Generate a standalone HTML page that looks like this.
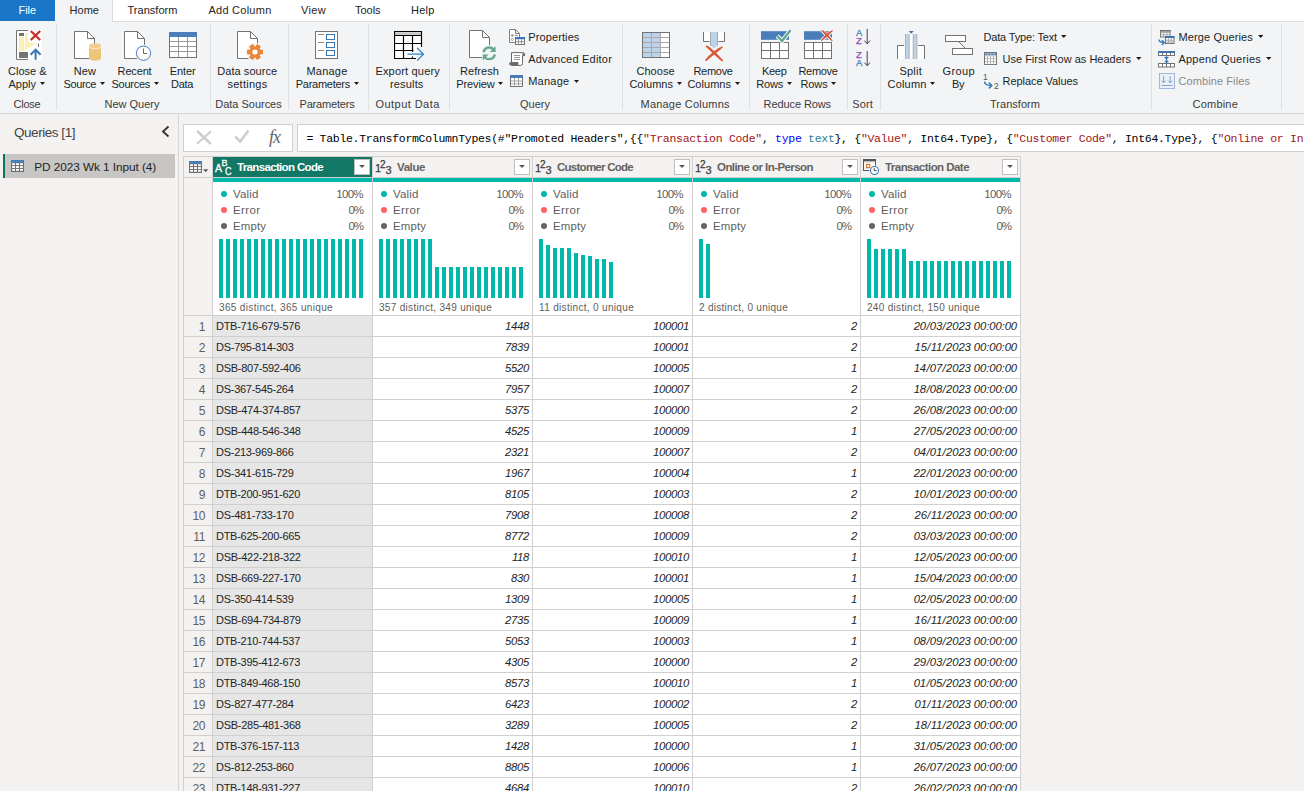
<!DOCTYPE html>
<html><head><meta charset="utf-8"><title>Power Query Editor</title>
<style>
html,body{margin:0;padding:0;width:1304px;height:791px;overflow:hidden;}
body{position:relative;background:#f3f2f1;font-family:"Liberation Sans",sans-serif;}
#w{position:absolute;left:0;top:0;width:1304px;height:791px;overflow:hidden;background:#f3f2f1;}
.t{position:absolute;white-space:pre;display:block;}
.b{position:absolute;display:block;}
</style></head><body><div id="w">
<div class="b" style="left:0px;top:0px;width:1304px;height:21px;background:#ffffff;"></div>
<div class="b" style="left:112px;top:21px;width:1192px;height:1px;background:#dadbdc;"></div>
<div class="b" style="left:0px;top:0px;width:55px;height:21px;background:#1976c8;"></div>
<div class="b" style="left:55px;top:0px;width:57px;height:22px;background:#f3f4f6;border-right:1px solid #dadbdc;"></div>
<span class="t" style="top:4.34px;font-size:11px;line-height:12.29px;color:#ffffff;left:18.50px;letter-spacing:-0.056px;">File</span>
<span class="t" style="top:4.34px;font-size:11px;line-height:12.29px;color:#252423;left:69.50px;letter-spacing:0.040px;">Home</span>
<span class="t" style="top:4.34px;font-size:11px;line-height:12.29px;color:#252423;left:127.50px;letter-spacing:0.033px;">Transform</span>
<span class="t" style="top:4.34px;font-size:11px;line-height:12.29px;color:#252423;left:208.50px;letter-spacing:0.247px;">Add Column</span>
<span class="t" style="top:4.34px;font-size:11px;line-height:12.29px;color:#252423;left:301.00px;letter-spacing:0.339px;">View</span>
<span class="t" style="top:4.34px;font-size:11px;line-height:12.29px;color:#252423;left:355.00px;letter-spacing:-0.036px;">Tools</span>
<span class="t" style="top:4.34px;font-size:11px;line-height:12.29px;color:#252423;left:411.00px;letter-spacing:0.219px;">Help</span>
<div class="b" style="left:0px;top:22px;width:1304px;height:91px;background:#f3f4f6;"></div>
<div class="b" style="left:0px;top:113px;width:1304px;height:1px;background:#d6d7d9;"></div>
<div class="b" style="left:0px;top:114px;width:1304px;height:677px;background:#f3f2f1;"></div>
<div class="b" style="left:56px;top:24px;width:1px;height:86px;background:#dfe0e2;"></div>
<div class="b" style="left:210px;top:24px;width:1px;height:86px;background:#dfe0e2;"></div>
<div class="b" style="left:288px;top:24px;width:1px;height:86px;background:#dfe0e2;"></div>
<div class="b" style="left:368px;top:24px;width:1px;height:86px;background:#dfe0e2;"></div>
<div class="b" style="left:449px;top:24px;width:1px;height:86px;background:#dfe0e2;"></div>
<div class="b" style="left:622px;top:24px;width:1px;height:86px;background:#dfe0e2;"></div>
<div class="b" style="left:749px;top:24px;width:1px;height:86px;background:#dfe0e2;"></div>
<div class="b" style="left:847px;top:24px;width:1px;height:86px;background:#dfe0e2;"></div>
<div class="b" style="left:880px;top:24px;width:1px;height:86px;background:#dfe0e2;"></div>
<div class="b" style="left:1151px;top:24px;width:1px;height:86px;background:#dfe0e2;"></div>
<div class="b" style="left:1281px;top:24px;width:1px;height:86px;background:#dfe0e2;"></div>
<span class="t" style="top:65.34px;font-size:11px;line-height:12.29px;color:#201f1e;left:8.00px;letter-spacing:-0.002px;">Close &amp;</span>
<span class="t" style="top:78.34px;font-size:11px;line-height:12.29px;color:#201f1e;left:8.50px;letter-spacing:-0.003px;">Apply</span>
<svg class="b" style="left:39.8px;top:82px" width="5" height="3" viewBox="0 0 5 3"><path d="M0 0H5L2.5 3Z" fill="#201f1e"/></svg>
<span class="t" style="top:98.34px;font-size:11px;line-height:12.29px;color:#3b3a39;left:13.50px;letter-spacing:-0.224px;">Close</span>
<span class="t" style="top:65.34px;font-size:11px;line-height:12.29px;color:#201f1e;left:73.70px;letter-spacing:0.098px;">New</span>
<span class="t" style="top:78.34px;font-size:11px;line-height:12.29px;color:#201f1e;left:63.60px;letter-spacing:-0.409px;">Source</span>
<svg class="b" style="left:99.8px;top:82px" width="5" height="3" viewBox="0 0 5 3"><path d="M0 0H5L2.5 3Z" fill="#201f1e"/></svg>
<span class="t" style="top:65.34px;font-size:11px;line-height:12.29px;color:#201f1e;left:117.60px;letter-spacing:-0.159px;">Recent</span>
<span class="t" style="top:78.34px;font-size:11px;line-height:12.29px;color:#201f1e;left:111.50px;letter-spacing:-0.264px;">Sources</span>
<svg class="b" style="left:153.8px;top:82px" width="5" height="3" viewBox="0 0 5 3"><path d="M0 0H5L2.5 3Z" fill="#201f1e"/></svg>
<span class="t" style="top:65.34px;font-size:11px;line-height:12.29px;color:#201f1e;left:169.70px;letter-spacing:-0.098px;">Enter</span>
<span class="t" style="top:78.34px;font-size:11px;line-height:12.29px;color:#201f1e;left:171.00px;letter-spacing:-0.309px;">Data</span>
<span class="t" style="top:98.34px;font-size:11px;line-height:12.29px;color:#3b3a39;left:104.50px;letter-spacing:-0.002px;">New Query</span>
<span class="t" style="top:65.34px;font-size:11px;line-height:12.29px;color:#201f1e;left:217.20px;letter-spacing:0.072px;">Data source</span>
<span class="t" style="top:78.34px;font-size:11px;line-height:12.29px;color:#201f1e;left:227.50px;letter-spacing:0.249px;">settings</span>
<span class="t" style="top:98.34px;font-size:11px;line-height:12.29px;color:#3b3a39;left:215.30px;letter-spacing:-0.020px;">Data Sources</span>
<span class="t" style="top:65.34px;font-size:11px;line-height:12.29px;color:#201f1e;left:306.50px;letter-spacing:0.209px;">Manage</span>
<span class="t" style="top:78.34px;font-size:11px;line-height:12.29px;color:#201f1e;left:295.80px;letter-spacing:-0.265px;">Parameters</span>
<svg class="b" style="left:353.8px;top:82px" width="5" height="3" viewBox="0 0 5 3"><path d="M0 0H5L2.5 3Z" fill="#201f1e"/></svg>
<span class="t" style="top:98.34px;font-size:11px;line-height:12.29px;color:#3b3a39;left:299.50px;letter-spacing:-0.185px;">Parameters</span>
<span class="t" style="top:65.34px;font-size:11px;line-height:12.29px;color:#201f1e;left:375.40px;letter-spacing:0.187px;">Export query</span>
<span class="t" style="top:78.34px;font-size:11px;line-height:12.29px;color:#201f1e;left:390.00px;letter-spacing:0.158px;">results</span>
<span class="t" style="top:98.34px;font-size:11px;line-height:12.29px;color:#3b3a39;left:375.50px;letter-spacing:0.445px;">Output Data</span>
<span class="t" style="top:65.34px;font-size:11px;line-height:12.29px;color:#201f1e;left:460.00px;letter-spacing:0.069px;">Refresh</span>
<span class="t" style="top:78.34px;font-size:11px;line-height:12.29px;color:#201f1e;left:456.30px;letter-spacing:-0.132px;">Preview</span>
<svg class="b" style="left:498.3px;top:82px" width="5" height="3" viewBox="0 0 5 3"><path d="M0 0H5L2.5 3Z" fill="#201f1e"/></svg>
<span class="t" style="top:31.35px;font-size:11px;line-height:12.29px;color:#201f1e;left:528.20px;letter-spacing:0.117px;">Properties</span>
<span class="t" style="top:53.34px;font-size:11px;line-height:12.29px;color:#201f1e;left:528.20px;letter-spacing:0.206px;">Advanced Editor</span>
<span class="t" style="top:75.34px;font-size:11px;line-height:12.29px;color:#201f1e;left:528.20px;letter-spacing:0.259px;">Manage</span>
<svg class="b" style="left:574px;top:79.5px" width="5" height="3" viewBox="0 0 5 3"><path d="M0 0H5L2.5 3Z" fill="#201f1e"/></svg>
<span class="t" style="top:98.34px;font-size:11px;line-height:12.29px;color:#3b3a39;left:520.00px;letter-spacing:0.009px;">Query</span>
<span class="t" style="top:65.34px;font-size:11px;line-height:12.29px;color:#201f1e;left:636.40px;letter-spacing:0.081px;">Choose</span>
<span class="t" style="top:78.34px;font-size:11px;line-height:12.29px;color:#201f1e;left:629.40px;letter-spacing:0.028px;">Columns</span>
<svg class="b" style="left:676.8px;top:82px" width="5" height="3" viewBox="0 0 5 3"><path d="M0 0H5L2.5 3Z" fill="#201f1e"/></svg>
<span class="t" style="top:65.34px;font-size:11px;line-height:12.29px;color:#201f1e;left:693.40px;letter-spacing:-0.276px;">Remove</span>
<span class="t" style="top:78.34px;font-size:11px;line-height:12.29px;color:#201f1e;left:687.40px;letter-spacing:0.028px;">Columns</span>
<svg class="b" style="left:734.8px;top:82px" width="5" height="3" viewBox="0 0 5 3"><path d="M0 0H5L2.5 3Z" fill="#201f1e"/></svg>
<span class="t" style="top:98.34px;font-size:11px;line-height:12.29px;color:#3b3a39;left:640.50px;letter-spacing:0.214px;">Manage Columns</span>
<span class="t" style="top:65.34px;font-size:11px;line-height:12.29px;color:#201f1e;left:762.00px;letter-spacing:-0.297px;">Keep</span>
<span class="t" style="top:78.34px;font-size:11px;line-height:12.29px;color:#201f1e;left:756.20px;letter-spacing:-0.176px;">Rows</span>
<svg class="b" style="left:786.8px;top:82px" width="5" height="3" viewBox="0 0 5 3"><path d="M0 0H5L2.5 3Z" fill="#201f1e"/></svg>
<span class="t" style="top:65.34px;font-size:11px;line-height:12.29px;color:#201f1e;left:798.50px;letter-spacing:-0.326px;">Remove</span>
<span class="t" style="top:78.34px;font-size:11px;line-height:12.29px;color:#201f1e;left:800.50px;letter-spacing:-0.126px;">Rows</span>
<svg class="b" style="left:831.3px;top:82px" width="5" height="3" viewBox="0 0 5 3"><path d="M0 0H5L2.5 3Z" fill="#201f1e"/></svg>
<span class="t" style="top:98.34px;font-size:11px;line-height:12.29px;color:#3b3a39;left:763.60px;letter-spacing:-0.098px;">Reduce Rows</span>
<span class="t" style="top:98.34px;font-size:11px;line-height:12.29px;color:#3b3a39;left:852.30px;letter-spacing:0.132px;">Sort</span>
<span class="t" style="top:65.34px;font-size:11px;line-height:12.29px;color:#201f1e;left:899.40px;letter-spacing:0.240px;">Split</span>
<span class="t" style="top:78.34px;font-size:11px;line-height:12.29px;color:#201f1e;left:887.60px;letter-spacing:0.166px;">Column</span>
<svg class="b" style="left:930.3px;top:82px" width="5" height="3" viewBox="0 0 5 3"><path d="M0 0H5L2.5 3Z" fill="#201f1e"/></svg>
<span class="t" style="top:65.34px;font-size:11px;line-height:12.29px;color:#201f1e;left:942.60px;letter-spacing:0.366px;">Group</span>
<span class="t" style="top:78.34px;font-size:11px;line-height:12.29px;color:#201f1e;left:952.00px;letter-spacing:-0.419px;">By</span>
<span class="t" style="top:31.35px;font-size:11px;line-height:12.29px;color:#201f1e;left:983.40px;letter-spacing:-0.161px;">Data Type: Text</span>
<svg class="b" style="left:1061px;top:35.2px" width="5.5" height="3" viewBox="0 0 5.5 3"><path d="M0 0H5.5L2.75 3Z" fill="#201f1e"/></svg>
<span class="t" style="top:53.34px;font-size:11px;line-height:12.29px;color:#201f1e;left:1002.50px;letter-spacing:0.006px;">Use First Row as Headers</span>
<svg class="b" style="left:1136.2px;top:57.2px" width="5.5" height="3" viewBox="0 0 5.5 3"><path d="M0 0H5.5L2.75 3Z" fill="#201f1e"/></svg>
<span class="t" style="top:75.34px;font-size:11px;line-height:12.29px;color:#201f1e;left:1002.50px;letter-spacing:-0.052px;">Replace Values</span>
<span class="t" style="top:98.34px;font-size:11px;line-height:12.29px;color:#3b3a39;left:990.00px;letter-spacing:0.033px;">Transform</span>
<span class="t" style="top:31.35px;font-size:11px;line-height:12.29px;color:#201f1e;left:1178.40px;letter-spacing:0.143px;">Merge Queries</span>
<svg class="b" style="left:1257.8px;top:35.2px" width="5.5" height="3" viewBox="0 0 5.5 3"><path d="M0 0H5.5L2.75 3Z" fill="#201f1e"/></svg>
<span class="t" style="top:53.34px;font-size:11px;line-height:12.29px;color:#201f1e;left:1178.40px;letter-spacing:0.222px;">Append Queries</span>
<svg class="b" style="left:1265.8px;top:57.2px" width="5.5" height="3" viewBox="0 0 5.5 3"><path d="M0 0H5.5L2.75 3Z" fill="#201f1e"/></svg>
<span class="t" style="top:75.34px;font-size:11px;line-height:12.29px;color:#8a8886;left:1178.40px;letter-spacing:0.100px;">Combine Files</span>
<span class="t" style="top:98.34px;font-size:11px;line-height:12.29px;color:#3b3a39;left:1192.60px;letter-spacing:0.197px;">Combine</span>
<div class="b" style="left:178px;top:114px;width:1px;height:677px;background:#d8d6d4;"></div>
<span class="t" style="top:125.08px;font-size:13.5px;line-height:15.08px;color:#444;left:14.00px;letter-spacing:-0.457px;">Queries [1]</span>
<svg class="b" style="left:161px;top:125px" width="9" height="13" viewBox="0 0 9 13"><path d="M7.5 1.5L2 6.5L7.5 11.5" fill="none" stroke="#323130" stroke-width="1.8"/></svg>
<div class="b" style="left:3px;top:154px;width:172px;height:24px;background:#c8c6c4;"></div>
<div class="b" style="left:3px;top:154px;width:2px;height:24px;background:#0b7560;"></div>
<span class="t" style="top:161.02px;font-size:11.8px;line-height:13.18px;color:#252423;left:34.20px;letter-spacing:-0.059px;">PD 2023 Wk 1 Input (4)</span>
<svg class="b" style="left:11px;top:160px" width="13" height="12" viewBox="0 0 13 12"><rect x="0" y="0" width="13" height="12" fill="#6e6e6e"/><rect x="0" y="0" width="13" height="2.8" fill="#4a7ebb"/><rect x="1.1" y="3.2" width="2.9" height="1.9" fill="#fff"/><rect x="1.1" y="6.05" width="2.9" height="1.9" fill="#fff"/><rect x="1.1" y="8.9" width="2.9" height="1.9" fill="#fff"/><rect x="5.05" y="3.2" width="2.9" height="1.9" fill="#fff"/><rect x="5.05" y="6.05" width="2.9" height="1.9" fill="#fff"/><rect x="5.05" y="8.9" width="2.9" height="1.9" fill="#fff"/><rect x="9.0" y="3.2" width="2.9" height="1.9" fill="#fff"/><rect x="9.0" y="6.05" width="2.9" height="1.9" fill="#fff"/><rect x="9.0" y="8.9" width="2.9" height="1.9" fill="#fff"/></svg>
<div class="b" style="left:183px;top:124px;width:110px;height:28px;background:#ffffff;border:1px solid #d2d0ce;box-sizing:border-box;"></div>
<div class="b" style="left:297px;top:124px;width:1010px;height:28px;background:#ffffff;border:1px solid #d2d0ce;box-sizing:border-box;"></div>
<svg class="b" style="left:196px;top:130px" width="16" height="16" viewBox="0 0 16 16"><path d="M1.2 1L14.8 14" stroke="#cdcdcd" stroke-width="2.5" fill="none"/><path d="M15 1.2L1 13.8" stroke="#cdcdcd" stroke-width="2" fill="none"/></svg>
<svg class="b" style="left:233px;top:129px" width="18" height="16" viewBox="0 0 18 16"><path d="M2.2 7.6L7.2 12.6L15.4 1.6" stroke="#cdcdcd" stroke-width="2.5" fill="none"/></svg>
<span class="t" style="left:269px;top:127.3px;font-family:'Liberation Serif',serif;font-style:italic;font-size:18px;line-height:20px;color:#666;letter-spacing:-1px">fx</span>
<div class="b" style="left:306.4px;top:131.8px;width:998px;height:17px;overflow:hidden;white-space:pre;font-family:'Liberation Mono',monospace;font-size:11.5px;letter-spacing:-0.3px;line-height:14px"><span style="color:#000">= Table.TransformColumnTypes(#&quot;Promoted Headers&quot;,{{</span><span style="color:#a31515">&quot;Transaction Code&quot;</span><span style="color:#000">, </span><span style="color:#0000ff">type</span><span style="color:#000"> </span><span style="color:#267f99">text</span><span style="color:#000">}, {</span><span style="color:#a31515">&quot;Value&quot;</span><span style="color:#000">, Int64.Type}, {</span><span style="color:#a31515">&quot;Customer Code&quot;</span><span style="color:#000">, Int64.Type}, {</span><span style="color:#a31515">&quot;Online or In-Person&quot;</span><span style="color:#000">, Int64.Type}</span></div>
<div class="b" style="left:183px;top:156px;width:838px;height:635px;background:#d2d0ce;"></div>
<div class="b" style="left:184px;top:157px;width:28px;height:20px;background:#f3f2f1;"></div>
<div class="b" style="left:184px;top:178px;width:28px;height:137px;background:#f3f2f1;"></div>
<svg class="b" style="left:189px;top:161px" width="20" height="12" viewBox="0 0 20 12"><rect x="0" y="0" width="13" height="12" fill="#6e6e6e"/><rect x="0" y="0" width="13" height="2.8" fill="#4a7ebb"/><rect x="1.1" y="3.2" width="2.9" height="1.9" fill="#fff"/><rect x="1.1" y="6.05" width="2.9" height="1.9" fill="#fff"/><rect x="1.1" y="8.9" width="2.9" height="1.9" fill="#fff"/><rect x="5.05" y="3.2" width="2.9" height="1.9" fill="#fff"/><rect x="5.05" y="6.05" width="2.9" height="1.9" fill="#fff"/><rect x="5.05" y="8.9" width="2.9" height="1.9" fill="#fff"/><rect x="9.0" y="3.2" width="2.9" height="1.9" fill="#fff"/><rect x="9.0" y="6.05" width="2.9" height="1.9" fill="#fff"/><rect x="9.0" y="8.9" width="2.9" height="1.9" fill="#fff"/><path d="M14.2 8.2H19.2L16.7 11.2Z" fill="#555"/></svg>
<div class="b" style="left:213px;top:157px;width:159px;height:20px;background:#127865;"></div>
<div class="b" style="left:213px;top:178px;width:159px;height:4px;background:#01b8aa;"></div>
<div class="b" style="left:213px;top:182px;width:159px;height:133px;background:#ffffff;"></div>
<span class="t" style="top:160.89px;font-size:11.5px;line-height:12.85px;color:#ffffff;left:237.00px;letter-spacing:-0.655px;font-weight:bold;">Transaction Code</span>
<div class="b" style="left:354px;top:159px;width:16px;height:16px;background:#ffffff;border:1px solid #c3bdbd;box-sizing:border-box;"></div>
<svg class="b" style="left:359px;top:165px" width="6" height="3" viewBox="0 0 6 3"><path d="M0 0H6L3.0 3Z" fill="#555"/></svg>
<span class="t" style="left:215px;top:162.3px;font-size:10.5px;line-height:12px;color:#ffffff;-webkit-text-stroke:0.3px #ffffff">A</span>
<span class="t" style="left:221.6px;top:157.5px;font-size:9px;line-height:10px;color:#ffffff;-webkit-text-stroke:0.3px #ffffff">B</span>
<span class="t" style="left:225.2px;top:165.8px;font-size:10px;line-height:11px;letter-spacing:0;transform:scaleX(0.9);transform-origin:0 0;color:#ffffff;-webkit-text-stroke:0.3px #ffffff">C</span>
<div class="b" style="left:221px;top:191px;width:6px;height:6px;border-radius:50%;background:#01b8aa"></div>
<span class="t" style="top:187.89px;font-size:11.5px;line-height:12.85px;color:#605e5c;left:233.00px;letter-spacing:0.176px;">Valid</span>
<span class="t" style="top:187.89px;font-size:11.5px;line-height:12.85px;color:#605e5c;left:336.30px;letter-spacing:-0.728px;">100%</span>
<div class="b" style="left:221px;top:207px;width:6px;height:6px;border-radius:50%;background:#fd625e"></div>
<span class="t" style="top:203.89px;font-size:11.5px;line-height:12.85px;color:#605e5c;left:233.00px;letter-spacing:0.369px;">Error</span>
<span class="t" style="top:203.89px;font-size:11.5px;line-height:12.85px;color:#605e5c;left:348.60px;letter-spacing:-1.211px;">0%</span>
<div class="b" style="left:221px;top:223px;width:6px;height:6px;border-radius:50%;background:#636363"></div>
<span class="t" style="top:219.89px;font-size:11.5px;line-height:12.85px;color:#605e5c;left:233.00px;letter-spacing:0.082px;">Empty</span>
<span class="t" style="top:219.89px;font-size:11.5px;line-height:12.85px;color:#605e5c;left:348.60px;letter-spacing:-1.211px;">0%</span>
<div class="b" style="left:373px;top:157px;width:159px;height:20px;background:#f3f2f1;"></div>
<div class="b" style="left:373px;top:178px;width:159px;height:4px;background:#01b8aa;"></div>
<div class="b" style="left:373px;top:182px;width:159px;height:133px;background:#ffffff;"></div>
<span class="t" style="top:160.89px;font-size:11.5px;line-height:12.85px;color:#646260;left:397.00px;letter-spacing:-0.409px;font-weight:bold;">Value</span>
<div class="b" style="left:514px;top:159px;width:16px;height:16px;background:#ffffff;border:1px solid #c3bdbd;box-sizing:border-box;"></div>
<svg class="b" style="left:519px;top:165px" width="6" height="3" viewBox="0 0 6 3"><path d="M0 0H6L3.0 3Z" fill="#555"/></svg>
<span class="t" style="left:375px;top:162px;font-size:11px;line-height:12px;color:#3b3a39;-webkit-text-stroke:0.25px #3b3a39">1</span>
<span class="t" style="left:380px;top:158.5px;font-size:10px;line-height:11px;color:#3b3a39;-webkit-text-stroke:0.25px #3b3a39">2</span>
<span class="t" style="left:385.5px;top:164px;font-size:11px;line-height:12px;color:#3b3a39;-webkit-text-stroke:0.25px #3b3a39">3</span>
<div class="b" style="left:381px;top:191px;width:6px;height:6px;border-radius:50%;background:#01b8aa"></div>
<span class="t" style="top:187.89px;font-size:11.5px;line-height:12.85px;color:#605e5c;left:393.00px;letter-spacing:0.176px;">Valid</span>
<span class="t" style="top:187.89px;font-size:11.5px;line-height:12.85px;color:#605e5c;left:496.30px;letter-spacing:-0.728px;">100%</span>
<div class="b" style="left:381px;top:207px;width:6px;height:6px;border-radius:50%;background:#fd625e"></div>
<span class="t" style="top:203.89px;font-size:11.5px;line-height:12.85px;color:#605e5c;left:393.00px;letter-spacing:0.369px;">Error</span>
<span class="t" style="top:203.89px;font-size:11.5px;line-height:12.85px;color:#605e5c;left:508.60px;letter-spacing:-1.211px;">0%</span>
<div class="b" style="left:381px;top:223px;width:6px;height:6px;border-radius:50%;background:#636363"></div>
<span class="t" style="top:219.89px;font-size:11.5px;line-height:12.85px;color:#605e5c;left:393.00px;letter-spacing:0.082px;">Empty</span>
<span class="t" style="top:219.89px;font-size:11.5px;line-height:12.85px;color:#605e5c;left:508.60px;letter-spacing:-1.211px;">0%</span>
<div class="b" style="left:533px;top:157px;width:159px;height:20px;background:#f3f2f1;"></div>
<div class="b" style="left:533px;top:178px;width:159px;height:4px;background:#01b8aa;"></div>
<div class="b" style="left:533px;top:182px;width:159px;height:133px;background:#ffffff;"></div>
<span class="t" style="top:160.89px;font-size:11.5px;line-height:12.85px;color:#646260;left:557.00px;letter-spacing:-0.740px;font-weight:bold;">Customer Code</span>
<div class="b" style="left:674px;top:159px;width:16px;height:16px;background:#ffffff;border:1px solid #c3bdbd;box-sizing:border-box;"></div>
<svg class="b" style="left:679px;top:165px" width="6" height="3" viewBox="0 0 6 3"><path d="M0 0H6L3.0 3Z" fill="#555"/></svg>
<span class="t" style="left:535px;top:162px;font-size:11px;line-height:12px;color:#3b3a39;-webkit-text-stroke:0.25px #3b3a39">1</span>
<span class="t" style="left:540px;top:158.5px;font-size:10px;line-height:11px;color:#3b3a39;-webkit-text-stroke:0.25px #3b3a39">2</span>
<span class="t" style="left:545.5px;top:164px;font-size:11px;line-height:12px;color:#3b3a39;-webkit-text-stroke:0.25px #3b3a39">3</span>
<div class="b" style="left:541px;top:191px;width:6px;height:6px;border-radius:50%;background:#01b8aa"></div>
<span class="t" style="top:187.89px;font-size:11.5px;line-height:12.85px;color:#605e5c;left:553.00px;letter-spacing:0.176px;">Valid</span>
<span class="t" style="top:187.89px;font-size:11.5px;line-height:12.85px;color:#605e5c;left:656.30px;letter-spacing:-0.728px;">100%</span>
<div class="b" style="left:541px;top:207px;width:6px;height:6px;border-radius:50%;background:#fd625e"></div>
<span class="t" style="top:203.89px;font-size:11.5px;line-height:12.85px;color:#605e5c;left:553.00px;letter-spacing:0.369px;">Error</span>
<span class="t" style="top:203.89px;font-size:11.5px;line-height:12.85px;color:#605e5c;left:668.60px;letter-spacing:-1.211px;">0%</span>
<div class="b" style="left:541px;top:223px;width:6px;height:6px;border-radius:50%;background:#636363"></div>
<span class="t" style="top:219.89px;font-size:11.5px;line-height:12.85px;color:#605e5c;left:553.00px;letter-spacing:0.082px;">Empty</span>
<span class="t" style="top:219.89px;font-size:11.5px;line-height:12.85px;color:#605e5c;left:668.60px;letter-spacing:-1.211px;">0%</span>
<div class="b" style="left:693px;top:157px;width:167px;height:20px;background:#f3f2f1;"></div>
<div class="b" style="left:693px;top:178px;width:167px;height:4px;background:#01b8aa;"></div>
<div class="b" style="left:693px;top:182px;width:167px;height:133px;background:#ffffff;"></div>
<span class="t" style="top:160.89px;font-size:11.5px;line-height:12.85px;color:#646260;left:717.00px;letter-spacing:-0.563px;font-weight:bold;">Online or In-Person</span>
<div class="b" style="left:842px;top:159px;width:16px;height:16px;background:#ffffff;border:1px solid #c3bdbd;box-sizing:border-box;"></div>
<svg class="b" style="left:847px;top:165px" width="6" height="3" viewBox="0 0 6 3"><path d="M0 0H6L3.0 3Z" fill="#555"/></svg>
<span class="t" style="left:695px;top:162px;font-size:11px;line-height:12px;color:#3b3a39;-webkit-text-stroke:0.25px #3b3a39">1</span>
<span class="t" style="left:700px;top:158.5px;font-size:10px;line-height:11px;color:#3b3a39;-webkit-text-stroke:0.25px #3b3a39">2</span>
<span class="t" style="left:705.5px;top:164px;font-size:11px;line-height:12px;color:#3b3a39;-webkit-text-stroke:0.25px #3b3a39">3</span>
<div class="b" style="left:701px;top:191px;width:6px;height:6px;border-radius:50%;background:#01b8aa"></div>
<span class="t" style="top:187.89px;font-size:11.5px;line-height:12.85px;color:#605e5c;left:713.00px;letter-spacing:0.176px;">Valid</span>
<span class="t" style="top:187.89px;font-size:11.5px;line-height:12.85px;color:#605e5c;left:824.30px;letter-spacing:-0.728px;">100%</span>
<div class="b" style="left:701px;top:207px;width:6px;height:6px;border-radius:50%;background:#fd625e"></div>
<span class="t" style="top:203.89px;font-size:11.5px;line-height:12.85px;color:#605e5c;left:713.00px;letter-spacing:0.369px;">Error</span>
<span class="t" style="top:203.89px;font-size:11.5px;line-height:12.85px;color:#605e5c;left:836.60px;letter-spacing:-1.211px;">0%</span>
<div class="b" style="left:701px;top:223px;width:6px;height:6px;border-radius:50%;background:#636363"></div>
<span class="t" style="top:219.89px;font-size:11.5px;line-height:12.85px;color:#605e5c;left:713.00px;letter-spacing:0.082px;">Empty</span>
<span class="t" style="top:219.89px;font-size:11.5px;line-height:12.85px;color:#605e5c;left:836.60px;letter-spacing:-1.211px;">0%</span>
<div class="b" style="left:861px;top:157px;width:159px;height:20px;background:#f3f2f1;"></div>
<div class="b" style="left:861px;top:178px;width:159px;height:4px;background:#01b8aa;"></div>
<div class="b" style="left:861px;top:182px;width:159px;height:133px;background:#ffffff;"></div>
<span class="t" style="top:160.89px;font-size:11.5px;line-height:12.85px;color:#646260;left:885.00px;letter-spacing:-0.541px;font-weight:bold;">Transaction Date</span>
<div class="b" style="left:1002px;top:159px;width:16px;height:16px;background:#ffffff;border:1px solid #c3bdbd;box-sizing:border-box;"></div>
<svg class="b" style="left:1007px;top:165px" width="6" height="3" viewBox="0 0 6 3"><path d="M0 0H6L3.0 3Z" fill="#555"/></svg>
<svg class="b" style="left:863px;top:159px" width="18" height="17" viewBox="0 0 18 17"><rect x="0.5" y="0.5" width="12" height="11" fill="#fff" stroke="#555"/><rect x="0" y="0" width="13" height="2.4" fill="#555"/><path d="M1.5 3.6H11.5M1.5 9.6H6" stroke="#d0d0d0" stroke-width="1" stroke-dasharray="1 1" fill="none"/><rect x="3.6" y="5.4" width="3.2" height="3.2" fill="#fff" stroke="#e07010" stroke-width="1.1"/><circle cx="11.5" cy="11.5" r="5.2" fill="#f3f2f1"/><circle cx="11.5" cy="11.5" r="4" fill="#fff" stroke="#3a77b8" stroke-width="1.1"/><path d="M11.3 9.2V11.7H13.6" stroke="#444" stroke-width="1" fill="none"/></svg>
<div class="b" style="left:869px;top:191px;width:6px;height:6px;border-radius:50%;background:#01b8aa"></div>
<span class="t" style="top:187.89px;font-size:11.5px;line-height:12.85px;color:#605e5c;left:881.00px;letter-spacing:0.176px;">Valid</span>
<span class="t" style="top:187.89px;font-size:11.5px;line-height:12.85px;color:#605e5c;left:984.30px;letter-spacing:-0.728px;">100%</span>
<div class="b" style="left:869px;top:207px;width:6px;height:6px;border-radius:50%;background:#fd625e"></div>
<span class="t" style="top:203.89px;font-size:11.5px;line-height:12.85px;color:#605e5c;left:881.00px;letter-spacing:0.369px;">Error</span>
<span class="t" style="top:203.89px;font-size:11.5px;line-height:12.85px;color:#605e5c;left:996.60px;letter-spacing:-1.211px;">0%</span>
<div class="b" style="left:869px;top:223px;width:6px;height:6px;border-radius:50%;background:#636363"></div>
<span class="t" style="top:219.89px;font-size:11.5px;line-height:12.85px;color:#605e5c;left:881.00px;letter-spacing:0.082px;">Empty</span>
<span class="t" style="top:219.89px;font-size:11.5px;line-height:12.85px;color:#605e5c;left:996.60px;letter-spacing:-1.211px;">0%</span>
<div class="b" style="left:219px;top:239px;width:4px;height:59px;background:#01b8aa;"></div>
<div class="b" style="left:226px;top:239px;width:4px;height:59px;background:#01b8aa;"></div>
<div class="b" style="left:233px;top:239px;width:4px;height:59px;background:#01b8aa;"></div>
<div class="b" style="left:240px;top:239px;width:4px;height:59px;background:#01b8aa;"></div>
<div class="b" style="left:247px;top:239px;width:4px;height:59px;background:#01b8aa;"></div>
<div class="b" style="left:254px;top:239px;width:4px;height:59px;background:#01b8aa;"></div>
<div class="b" style="left:261px;top:239px;width:4px;height:59px;background:#01b8aa;"></div>
<div class="b" style="left:268px;top:239px;width:4px;height:59px;background:#01b8aa;"></div>
<div class="b" style="left:275px;top:239px;width:4px;height:59px;background:#01b8aa;"></div>
<div class="b" style="left:282px;top:239px;width:4px;height:59px;background:#01b8aa;"></div>
<div class="b" style="left:289px;top:239px;width:4px;height:59px;background:#01b8aa;"></div>
<div class="b" style="left:296px;top:239px;width:4px;height:59px;background:#01b8aa;"></div>
<div class="b" style="left:303px;top:239px;width:4px;height:59px;background:#01b8aa;"></div>
<div class="b" style="left:310px;top:239px;width:4px;height:59px;background:#01b8aa;"></div>
<div class="b" style="left:317px;top:239px;width:4px;height:59px;background:#01b8aa;"></div>
<div class="b" style="left:324px;top:239px;width:4px;height:59px;background:#01b8aa;"></div>
<div class="b" style="left:331px;top:239px;width:4px;height:59px;background:#01b8aa;"></div>
<div class="b" style="left:338px;top:239px;width:4px;height:59px;background:#01b8aa;"></div>
<div class="b" style="left:345px;top:239px;width:4px;height:59px;background:#01b8aa;"></div>
<div class="b" style="left:352px;top:239px;width:4px;height:59px;background:#01b8aa;"></div>
<div class="b" style="left:359px;top:239px;width:4px;height:59px;background:#01b8aa;"></div>
<div class="b" style="left:379px;top:239px;width:4px;height:59px;background:#01b8aa;"></div>
<div class="b" style="left:386px;top:239px;width:4px;height:59px;background:#01b8aa;"></div>
<div class="b" style="left:393px;top:239px;width:4px;height:59px;background:#01b8aa;"></div>
<div class="b" style="left:400px;top:239px;width:4px;height:59px;background:#01b8aa;"></div>
<div class="b" style="left:407px;top:239px;width:4px;height:59px;background:#01b8aa;"></div>
<div class="b" style="left:414px;top:239px;width:4px;height:59px;background:#01b8aa;"></div>
<div class="b" style="left:421px;top:239px;width:4px;height:59px;background:#01b8aa;"></div>
<div class="b" style="left:428px;top:239px;width:4px;height:59px;background:#01b8aa;"></div>
<div class="b" style="left:435px;top:267px;width:4px;height:31px;background:#01b8aa;"></div>
<div class="b" style="left:442px;top:267px;width:4px;height:31px;background:#01b8aa;"></div>
<div class="b" style="left:449px;top:267px;width:4px;height:31px;background:#01b8aa;"></div>
<div class="b" style="left:456px;top:267px;width:4px;height:31px;background:#01b8aa;"></div>
<div class="b" style="left:463px;top:267px;width:4px;height:31px;background:#01b8aa;"></div>
<div class="b" style="left:470px;top:267px;width:4px;height:31px;background:#01b8aa;"></div>
<div class="b" style="left:477px;top:267px;width:4px;height:31px;background:#01b8aa;"></div>
<div class="b" style="left:484px;top:267px;width:4px;height:31px;background:#01b8aa;"></div>
<div class="b" style="left:491px;top:267px;width:4px;height:31px;background:#01b8aa;"></div>
<div class="b" style="left:498px;top:267px;width:4px;height:31px;background:#01b8aa;"></div>
<div class="b" style="left:505px;top:267px;width:4px;height:31px;background:#01b8aa;"></div>
<div class="b" style="left:512px;top:267px;width:4px;height:31px;background:#01b8aa;"></div>
<div class="b" style="left:519px;top:267px;width:4px;height:31px;background:#01b8aa;"></div>
<div class="b" style="left:539px;top:239px;width:4px;height:59px;background:#01b8aa;"></div>
<div class="b" style="left:546px;top:245px;width:4px;height:53px;background:#01b8aa;"></div>
<div class="b" style="left:553px;top:248px;width:4px;height:50px;background:#01b8aa;"></div>
<div class="b" style="left:560px;top:248px;width:4px;height:50px;background:#01b8aa;"></div>
<div class="b" style="left:567px;top:248px;width:4px;height:50px;background:#01b8aa;"></div>
<div class="b" style="left:574px;top:253px;width:4px;height:45px;background:#01b8aa;"></div>
<div class="b" style="left:581px;top:255px;width:4px;height:43px;background:#01b8aa;"></div>
<div class="b" style="left:588px;top:256px;width:4px;height:42px;background:#01b8aa;"></div>
<div class="b" style="left:595px;top:259px;width:4px;height:39px;background:#01b8aa;"></div>
<div class="b" style="left:602px;top:259px;width:4px;height:39px;background:#01b8aa;"></div>
<div class="b" style="left:609px;top:262px;width:4px;height:36px;background:#01b8aa;"></div>
<div class="b" style="left:699px;top:239px;width:4px;height:59px;background:#01b8aa;"></div>
<div class="b" style="left:706px;top:244px;width:4px;height:54px;background:#01b8aa;"></div>
<div class="b" style="left:867px;top:239px;width:4px;height:59px;background:#01b8aa;"></div>
<div class="b" style="left:874px;top:249px;width:4px;height:49px;background:#01b8aa;"></div>
<div class="b" style="left:881px;top:249px;width:4px;height:49px;background:#01b8aa;"></div>
<div class="b" style="left:888px;top:249px;width:4px;height:49px;background:#01b8aa;"></div>
<div class="b" style="left:895px;top:249px;width:4px;height:49px;background:#01b8aa;"></div>
<div class="b" style="left:902px;top:249px;width:4px;height:49px;background:#01b8aa;"></div>
<div class="b" style="left:909px;top:261px;width:4px;height:37px;background:#01b8aa;"></div>
<div class="b" style="left:916px;top:261px;width:4px;height:37px;background:#01b8aa;"></div>
<div class="b" style="left:923px;top:261px;width:4px;height:37px;background:#01b8aa;"></div>
<div class="b" style="left:930px;top:261px;width:4px;height:37px;background:#01b8aa;"></div>
<div class="b" style="left:937px;top:261px;width:4px;height:37px;background:#01b8aa;"></div>
<div class="b" style="left:944px;top:261px;width:4px;height:37px;background:#01b8aa;"></div>
<div class="b" style="left:951px;top:261px;width:4px;height:37px;background:#01b8aa;"></div>
<div class="b" style="left:958px;top:261px;width:4px;height:37px;background:#01b8aa;"></div>
<div class="b" style="left:965px;top:261px;width:4px;height:37px;background:#01b8aa;"></div>
<div class="b" style="left:972px;top:261px;width:4px;height:37px;background:#01b8aa;"></div>
<div class="b" style="left:979px;top:261px;width:4px;height:37px;background:#01b8aa;"></div>
<div class="b" style="left:986px;top:261px;width:4px;height:37px;background:#01b8aa;"></div>
<div class="b" style="left:993px;top:261px;width:4px;height:37px;background:#01b8aa;"></div>
<div class="b" style="left:1000px;top:261px;width:4px;height:37px;background:#01b8aa;"></div>
<div class="b" style="left:1007px;top:261px;width:4px;height:37px;background:#01b8aa;"></div>
<span class="t" style="top:302.25px;font-size:10px;line-height:11.17px;color:#605e5c;left:219.00px;letter-spacing:0.349px;">365 distinct, 365 unique</span>
<span class="t" style="top:302.25px;font-size:10px;line-height:11.17px;color:#605e5c;left:379.00px;letter-spacing:0.307px;">357 distinct, 349 unique</span>
<span class="t" style="top:302.25px;font-size:10px;line-height:11.17px;color:#605e5c;left:539.00px;letter-spacing:0.324px;">11 distinct, 0 unique</span>
<span class="t" style="top:302.25px;font-size:10px;line-height:11.17px;color:#605e5c;left:699.00px;letter-spacing:0.281px;">2 distinct, 0 unique</span>
<span class="t" style="top:302.25px;font-size:10px;line-height:11.17px;color:#605e5c;left:867.00px;letter-spacing:0.307px;">240 distinct, 150 unique</span>
<div class="b" style="left:184px;top:316px;width:28px;height:20px;background:#f3f2f1;"></div>
<span class="t" style="top:320.64px;font-size:12px;line-height:13.40px;color:#605e5c;right:1099.70px;letter-spacing:-0.5px;margin-right:-0.5px;">1</span>
<div class="b" style="left:213px;top:316px;width:159px;height:20px;background:#e6e6e6;"></div>
<span class="t" style="top:319.94px;font-size:11px;line-height:12.29px;color:#252423;left:216.00px;letter-spacing:-0.27px;">DTB-716-679-576</span>
<div class="b" style="left:373px;top:316px;width:159px;height:20px;background:#ffffff;"></div>
<span class="t" style="top:320.27px;font-size:11.3px;line-height:12.62px;color:#252423;right:775.00px;font-style:italic;letter-spacing:-0.3px;">1448</span>
<div class="b" style="left:533px;top:316px;width:159px;height:20px;background:#ffffff;"></div>
<span class="t" style="top:320.27px;font-size:11.3px;line-height:12.62px;color:#252423;right:615.00px;font-style:italic;letter-spacing:-0.3px;">100001</span>
<div class="b" style="left:693px;top:316px;width:167px;height:20px;background:#ffffff;"></div>
<span class="t" style="top:320.27px;font-size:11.3px;line-height:12.62px;color:#252423;right:447.00px;font-style:italic;letter-spacing:-0.3px;">2</span>
<div class="b" style="left:861px;top:316px;width:159px;height:20px;background:#ffffff;"></div>
<span class="t" style="top:320.27px;font-size:11.3px;line-height:12.62px;color:#252423;right:287.00px;font-style:italic;letter-spacing:-0.1px;">20<span style="margin:0 0.4px">/</span>03<span style="margin:0 0.4px">/</span>2023 00:00:00</span>
<div class="b" style="left:184px;top:337px;width:28px;height:20px;background:#f3f2f1;"></div>
<span class="t" style="top:341.64px;font-size:12px;line-height:13.40px;color:#605e5c;right:1099.70px;letter-spacing:-0.5px;margin-right:-0.5px;">2</span>
<div class="b" style="left:213px;top:337px;width:159px;height:20px;background:#e6e6e6;"></div>
<span class="t" style="top:340.94px;font-size:11px;line-height:12.29px;color:#252423;left:216.00px;letter-spacing:-0.27px;">DS-795-814-303</span>
<div class="b" style="left:373px;top:337px;width:159px;height:20px;background:#ffffff;"></div>
<span class="t" style="top:341.27px;font-size:11.3px;line-height:12.62px;color:#252423;right:775.00px;font-style:italic;letter-spacing:-0.3px;">7839</span>
<div class="b" style="left:533px;top:337px;width:159px;height:20px;background:#ffffff;"></div>
<span class="t" style="top:341.27px;font-size:11.3px;line-height:12.62px;color:#252423;right:615.00px;font-style:italic;letter-spacing:-0.3px;">100001</span>
<div class="b" style="left:693px;top:337px;width:167px;height:20px;background:#ffffff;"></div>
<span class="t" style="top:341.27px;font-size:11.3px;line-height:12.62px;color:#252423;right:447.00px;font-style:italic;letter-spacing:-0.3px;">2</span>
<div class="b" style="left:861px;top:337px;width:159px;height:20px;background:#ffffff;"></div>
<span class="t" style="top:341.27px;font-size:11.3px;line-height:12.62px;color:#252423;right:287.00px;font-style:italic;letter-spacing:-0.1px;">15<span style="margin:0 0.4px">/</span>11<span style="margin:0 0.4px">/</span>2023 00:00:00</span>
<div class="b" style="left:184px;top:358px;width:28px;height:20px;background:#f3f2f1;"></div>
<span class="t" style="top:362.64px;font-size:12px;line-height:13.40px;color:#605e5c;right:1099.70px;letter-spacing:-0.5px;margin-right:-0.5px;">3</span>
<div class="b" style="left:213px;top:358px;width:159px;height:20px;background:#e6e6e6;"></div>
<span class="t" style="top:361.94px;font-size:11px;line-height:12.29px;color:#252423;left:216.00px;letter-spacing:-0.27px;">DSB-807-592-406</span>
<div class="b" style="left:373px;top:358px;width:159px;height:20px;background:#ffffff;"></div>
<span class="t" style="top:362.27px;font-size:11.3px;line-height:12.62px;color:#252423;right:775.00px;font-style:italic;letter-spacing:-0.3px;">5520</span>
<div class="b" style="left:533px;top:358px;width:159px;height:20px;background:#ffffff;"></div>
<span class="t" style="top:362.27px;font-size:11.3px;line-height:12.62px;color:#252423;right:615.00px;font-style:italic;letter-spacing:-0.3px;">100005</span>
<div class="b" style="left:693px;top:358px;width:167px;height:20px;background:#ffffff;"></div>
<span class="t" style="top:362.27px;font-size:11.3px;line-height:12.62px;color:#252423;right:447.00px;font-style:italic;letter-spacing:-0.3px;">1</span>
<div class="b" style="left:861px;top:358px;width:159px;height:20px;background:#ffffff;"></div>
<span class="t" style="top:362.27px;font-size:11.3px;line-height:12.62px;color:#252423;right:287.00px;font-style:italic;letter-spacing:-0.1px;">14<span style="margin:0 0.4px">/</span>07<span style="margin:0 0.4px">/</span>2023 00:00:00</span>
<div class="b" style="left:184px;top:379px;width:28px;height:20px;background:#f3f2f1;"></div>
<span class="t" style="top:383.64px;font-size:12px;line-height:13.40px;color:#605e5c;right:1099.70px;letter-spacing:-0.5px;margin-right:-0.5px;">4</span>
<div class="b" style="left:213px;top:379px;width:159px;height:20px;background:#e6e6e6;"></div>
<span class="t" style="top:382.94px;font-size:11px;line-height:12.29px;color:#252423;left:216.00px;letter-spacing:-0.27px;">DS-367-545-264</span>
<div class="b" style="left:373px;top:379px;width:159px;height:20px;background:#ffffff;"></div>
<span class="t" style="top:383.27px;font-size:11.3px;line-height:12.62px;color:#252423;right:775.00px;font-style:italic;letter-spacing:-0.3px;">7957</span>
<div class="b" style="left:533px;top:379px;width:159px;height:20px;background:#ffffff;"></div>
<span class="t" style="top:383.27px;font-size:11.3px;line-height:12.62px;color:#252423;right:615.00px;font-style:italic;letter-spacing:-0.3px;">100007</span>
<div class="b" style="left:693px;top:379px;width:167px;height:20px;background:#ffffff;"></div>
<span class="t" style="top:383.27px;font-size:11.3px;line-height:12.62px;color:#252423;right:447.00px;font-style:italic;letter-spacing:-0.3px;">2</span>
<div class="b" style="left:861px;top:379px;width:159px;height:20px;background:#ffffff;"></div>
<span class="t" style="top:383.27px;font-size:11.3px;line-height:12.62px;color:#252423;right:287.00px;font-style:italic;letter-spacing:-0.1px;">18<span style="margin:0 0.4px">/</span>08<span style="margin:0 0.4px">/</span>2023 00:00:00</span>
<div class="b" style="left:184px;top:400px;width:28px;height:20px;background:#f3f2f1;"></div>
<span class="t" style="top:404.64px;font-size:12px;line-height:13.40px;color:#605e5c;right:1099.70px;letter-spacing:-0.5px;margin-right:-0.5px;">5</span>
<div class="b" style="left:213px;top:400px;width:159px;height:20px;background:#e6e6e6;"></div>
<span class="t" style="top:403.94px;font-size:11px;line-height:12.29px;color:#252423;left:216.00px;letter-spacing:-0.27px;">DSB-474-374-857</span>
<div class="b" style="left:373px;top:400px;width:159px;height:20px;background:#ffffff;"></div>
<span class="t" style="top:404.27px;font-size:11.3px;line-height:12.62px;color:#252423;right:775.00px;font-style:italic;letter-spacing:-0.3px;">5375</span>
<div class="b" style="left:533px;top:400px;width:159px;height:20px;background:#ffffff;"></div>
<span class="t" style="top:404.27px;font-size:11.3px;line-height:12.62px;color:#252423;right:615.00px;font-style:italic;letter-spacing:-0.3px;">100000</span>
<div class="b" style="left:693px;top:400px;width:167px;height:20px;background:#ffffff;"></div>
<span class="t" style="top:404.27px;font-size:11.3px;line-height:12.62px;color:#252423;right:447.00px;font-style:italic;letter-spacing:-0.3px;">2</span>
<div class="b" style="left:861px;top:400px;width:159px;height:20px;background:#ffffff;"></div>
<span class="t" style="top:404.27px;font-size:11.3px;line-height:12.62px;color:#252423;right:287.00px;font-style:italic;letter-spacing:-0.1px;">26<span style="margin:0 0.4px">/</span>08<span style="margin:0 0.4px">/</span>2023 00:00:00</span>
<div class="b" style="left:184px;top:421px;width:28px;height:20px;background:#f3f2f1;"></div>
<span class="t" style="top:425.64px;font-size:12px;line-height:13.40px;color:#605e5c;right:1099.70px;letter-spacing:-0.5px;margin-right:-0.5px;">6</span>
<div class="b" style="left:213px;top:421px;width:159px;height:20px;background:#e6e6e6;"></div>
<span class="t" style="top:424.94px;font-size:11px;line-height:12.29px;color:#252423;left:216.00px;letter-spacing:-0.27px;">DSB-448-546-348</span>
<div class="b" style="left:373px;top:421px;width:159px;height:20px;background:#ffffff;"></div>
<span class="t" style="top:425.27px;font-size:11.3px;line-height:12.62px;color:#252423;right:775.00px;font-style:italic;letter-spacing:-0.3px;">4525</span>
<div class="b" style="left:533px;top:421px;width:159px;height:20px;background:#ffffff;"></div>
<span class="t" style="top:425.27px;font-size:11.3px;line-height:12.62px;color:#252423;right:615.00px;font-style:italic;letter-spacing:-0.3px;">100009</span>
<div class="b" style="left:693px;top:421px;width:167px;height:20px;background:#ffffff;"></div>
<span class="t" style="top:425.27px;font-size:11.3px;line-height:12.62px;color:#252423;right:447.00px;font-style:italic;letter-spacing:-0.3px;">1</span>
<div class="b" style="left:861px;top:421px;width:159px;height:20px;background:#ffffff;"></div>
<span class="t" style="top:425.27px;font-size:11.3px;line-height:12.62px;color:#252423;right:287.00px;font-style:italic;letter-spacing:-0.1px;">27<span style="margin:0 0.4px">/</span>05<span style="margin:0 0.4px">/</span>2023 00:00:00</span>
<div class="b" style="left:184px;top:442px;width:28px;height:20px;background:#f3f2f1;"></div>
<span class="t" style="top:446.64px;font-size:12px;line-height:13.40px;color:#605e5c;right:1099.70px;letter-spacing:-0.5px;margin-right:-0.5px;">7</span>
<div class="b" style="left:213px;top:442px;width:159px;height:20px;background:#e6e6e6;"></div>
<span class="t" style="top:445.94px;font-size:11px;line-height:12.29px;color:#252423;left:216.00px;letter-spacing:-0.27px;">DS-213-969-866</span>
<div class="b" style="left:373px;top:442px;width:159px;height:20px;background:#ffffff;"></div>
<span class="t" style="top:446.27px;font-size:11.3px;line-height:12.62px;color:#252423;right:775.00px;font-style:italic;letter-spacing:-0.3px;">2321</span>
<div class="b" style="left:533px;top:442px;width:159px;height:20px;background:#ffffff;"></div>
<span class="t" style="top:446.27px;font-size:11.3px;line-height:12.62px;color:#252423;right:615.00px;font-style:italic;letter-spacing:-0.3px;">100007</span>
<div class="b" style="left:693px;top:442px;width:167px;height:20px;background:#ffffff;"></div>
<span class="t" style="top:446.27px;font-size:11.3px;line-height:12.62px;color:#252423;right:447.00px;font-style:italic;letter-spacing:-0.3px;">2</span>
<div class="b" style="left:861px;top:442px;width:159px;height:20px;background:#ffffff;"></div>
<span class="t" style="top:446.27px;font-size:11.3px;line-height:12.62px;color:#252423;right:287.00px;font-style:italic;letter-spacing:-0.1px;">04<span style="margin:0 0.4px">/</span>01<span style="margin:0 0.4px">/</span>2023 00:00:00</span>
<div class="b" style="left:184px;top:463px;width:28px;height:20px;background:#f3f2f1;"></div>
<span class="t" style="top:467.64px;font-size:12px;line-height:13.40px;color:#605e5c;right:1099.70px;letter-spacing:-0.5px;margin-right:-0.5px;">8</span>
<div class="b" style="left:213px;top:463px;width:159px;height:20px;background:#e6e6e6;"></div>
<span class="t" style="top:466.94px;font-size:11px;line-height:12.29px;color:#252423;left:216.00px;letter-spacing:-0.27px;">DS-341-615-729</span>
<div class="b" style="left:373px;top:463px;width:159px;height:20px;background:#ffffff;"></div>
<span class="t" style="top:467.27px;font-size:11.3px;line-height:12.62px;color:#252423;right:775.00px;font-style:italic;letter-spacing:-0.3px;">1967</span>
<div class="b" style="left:533px;top:463px;width:159px;height:20px;background:#ffffff;"></div>
<span class="t" style="top:467.27px;font-size:11.3px;line-height:12.62px;color:#252423;right:615.00px;font-style:italic;letter-spacing:-0.3px;">100004</span>
<div class="b" style="left:693px;top:463px;width:167px;height:20px;background:#ffffff;"></div>
<span class="t" style="top:467.27px;font-size:11.3px;line-height:12.62px;color:#252423;right:447.00px;font-style:italic;letter-spacing:-0.3px;">1</span>
<div class="b" style="left:861px;top:463px;width:159px;height:20px;background:#ffffff;"></div>
<span class="t" style="top:467.27px;font-size:11.3px;line-height:12.62px;color:#252423;right:287.00px;font-style:italic;letter-spacing:-0.1px;">22<span style="margin:0 0.4px">/</span>01<span style="margin:0 0.4px">/</span>2023 00:00:00</span>
<div class="b" style="left:184px;top:484px;width:28px;height:20px;background:#f3f2f1;"></div>
<span class="t" style="top:488.64px;font-size:12px;line-height:13.40px;color:#605e5c;right:1099.70px;letter-spacing:-0.5px;margin-right:-0.5px;">9</span>
<div class="b" style="left:213px;top:484px;width:159px;height:20px;background:#e6e6e6;"></div>
<span class="t" style="top:487.94px;font-size:11px;line-height:12.29px;color:#252423;left:216.00px;letter-spacing:-0.27px;">DTB-200-951-620</span>
<div class="b" style="left:373px;top:484px;width:159px;height:20px;background:#ffffff;"></div>
<span class="t" style="top:488.27px;font-size:11.3px;line-height:12.62px;color:#252423;right:775.00px;font-style:italic;letter-spacing:-0.3px;">8105</span>
<div class="b" style="left:533px;top:484px;width:159px;height:20px;background:#ffffff;"></div>
<span class="t" style="top:488.27px;font-size:11.3px;line-height:12.62px;color:#252423;right:615.00px;font-style:italic;letter-spacing:-0.3px;">100003</span>
<div class="b" style="left:693px;top:484px;width:167px;height:20px;background:#ffffff;"></div>
<span class="t" style="top:488.27px;font-size:11.3px;line-height:12.62px;color:#252423;right:447.00px;font-style:italic;letter-spacing:-0.3px;">2</span>
<div class="b" style="left:861px;top:484px;width:159px;height:20px;background:#ffffff;"></div>
<span class="t" style="top:488.27px;font-size:11.3px;line-height:12.62px;color:#252423;right:287.00px;font-style:italic;letter-spacing:-0.1px;">10<span style="margin:0 0.4px">/</span>01<span style="margin:0 0.4px">/</span>2023 00:00:00</span>
<div class="b" style="left:184px;top:505px;width:28px;height:20px;background:#f3f2f1;"></div>
<span class="t" style="top:509.64px;font-size:12px;line-height:13.40px;color:#605e5c;right:1099.70px;letter-spacing:-0.5px;margin-right:-0.5px;">10</span>
<div class="b" style="left:213px;top:505px;width:159px;height:20px;background:#e6e6e6;"></div>
<span class="t" style="top:508.95px;font-size:11px;line-height:12.29px;color:#252423;left:216.00px;letter-spacing:-0.27px;">DS-481-733-170</span>
<div class="b" style="left:373px;top:505px;width:159px;height:20px;background:#ffffff;"></div>
<span class="t" style="top:509.27px;font-size:11.3px;line-height:12.62px;color:#252423;right:775.00px;font-style:italic;letter-spacing:-0.3px;">7908</span>
<div class="b" style="left:533px;top:505px;width:159px;height:20px;background:#ffffff;"></div>
<span class="t" style="top:509.27px;font-size:11.3px;line-height:12.62px;color:#252423;right:615.00px;font-style:italic;letter-spacing:-0.3px;">100008</span>
<div class="b" style="left:693px;top:505px;width:167px;height:20px;background:#ffffff;"></div>
<span class="t" style="top:509.27px;font-size:11.3px;line-height:12.62px;color:#252423;right:447.00px;font-style:italic;letter-spacing:-0.3px;">2</span>
<div class="b" style="left:861px;top:505px;width:159px;height:20px;background:#ffffff;"></div>
<span class="t" style="top:509.27px;font-size:11.3px;line-height:12.62px;color:#252423;right:287.00px;font-style:italic;letter-spacing:-0.1px;">26<span style="margin:0 0.4px">/</span>11<span style="margin:0 0.4px">/</span>2023 00:00:00</span>
<div class="b" style="left:184px;top:526px;width:28px;height:20px;background:#f3f2f1;"></div>
<span class="t" style="top:530.64px;font-size:12px;line-height:13.40px;color:#605e5c;right:1099.70px;letter-spacing:-0.5px;margin-right:-0.5px;">11</span>
<div class="b" style="left:213px;top:526px;width:159px;height:20px;background:#e6e6e6;"></div>
<span class="t" style="top:529.94px;font-size:11px;line-height:12.29px;color:#252423;left:216.00px;letter-spacing:-0.27px;">DTB-625-200-665</span>
<div class="b" style="left:373px;top:526px;width:159px;height:20px;background:#ffffff;"></div>
<span class="t" style="top:530.27px;font-size:11.3px;line-height:12.62px;color:#252423;right:775.00px;font-style:italic;letter-spacing:-0.3px;">8772</span>
<div class="b" style="left:533px;top:526px;width:159px;height:20px;background:#ffffff;"></div>
<span class="t" style="top:530.27px;font-size:11.3px;line-height:12.62px;color:#252423;right:615.00px;font-style:italic;letter-spacing:-0.3px;">100009</span>
<div class="b" style="left:693px;top:526px;width:167px;height:20px;background:#ffffff;"></div>
<span class="t" style="top:530.27px;font-size:11.3px;line-height:12.62px;color:#252423;right:447.00px;font-style:italic;letter-spacing:-0.3px;">2</span>
<div class="b" style="left:861px;top:526px;width:159px;height:20px;background:#ffffff;"></div>
<span class="t" style="top:530.27px;font-size:11.3px;line-height:12.62px;color:#252423;right:287.00px;font-style:italic;letter-spacing:-0.1px;">03<span style="margin:0 0.4px">/</span>03<span style="margin:0 0.4px">/</span>2023 00:00:00</span>
<div class="b" style="left:184px;top:547px;width:28px;height:20px;background:#f3f2f1;"></div>
<span class="t" style="top:551.64px;font-size:12px;line-height:13.40px;color:#605e5c;right:1099.70px;letter-spacing:-0.5px;margin-right:-0.5px;">12</span>
<div class="b" style="left:213px;top:547px;width:159px;height:20px;background:#e6e6e6;"></div>
<span class="t" style="top:550.94px;font-size:11px;line-height:12.29px;color:#252423;left:216.00px;letter-spacing:-0.27px;">DSB-422-218-322</span>
<div class="b" style="left:373px;top:547px;width:159px;height:20px;background:#ffffff;"></div>
<span class="t" style="top:551.27px;font-size:11.3px;line-height:12.62px;color:#252423;right:775.00px;font-style:italic;letter-spacing:-0.3px;">118</span>
<div class="b" style="left:533px;top:547px;width:159px;height:20px;background:#ffffff;"></div>
<span class="t" style="top:551.27px;font-size:11.3px;line-height:12.62px;color:#252423;right:615.00px;font-style:italic;letter-spacing:-0.3px;">100010</span>
<div class="b" style="left:693px;top:547px;width:167px;height:20px;background:#ffffff;"></div>
<span class="t" style="top:551.27px;font-size:11.3px;line-height:12.62px;color:#252423;right:447.00px;font-style:italic;letter-spacing:-0.3px;">1</span>
<div class="b" style="left:861px;top:547px;width:159px;height:20px;background:#ffffff;"></div>
<span class="t" style="top:551.27px;font-size:11.3px;line-height:12.62px;color:#252423;right:287.00px;font-style:italic;letter-spacing:-0.1px;">12<span style="margin:0 0.4px">/</span>05<span style="margin:0 0.4px">/</span>2023 00:00:00</span>
<div class="b" style="left:184px;top:568px;width:28px;height:20px;background:#f3f2f1;"></div>
<span class="t" style="top:572.64px;font-size:12px;line-height:13.40px;color:#605e5c;right:1099.70px;letter-spacing:-0.5px;margin-right:-0.5px;">13</span>
<div class="b" style="left:213px;top:568px;width:159px;height:20px;background:#e6e6e6;"></div>
<span class="t" style="top:571.94px;font-size:11px;line-height:12.29px;color:#252423;left:216.00px;letter-spacing:-0.27px;">DSB-669-227-170</span>
<div class="b" style="left:373px;top:568px;width:159px;height:20px;background:#ffffff;"></div>
<span class="t" style="top:572.27px;font-size:11.3px;line-height:12.62px;color:#252423;right:775.00px;font-style:italic;letter-spacing:-0.3px;">830</span>
<div class="b" style="left:533px;top:568px;width:159px;height:20px;background:#ffffff;"></div>
<span class="t" style="top:572.27px;font-size:11.3px;line-height:12.62px;color:#252423;right:615.00px;font-style:italic;letter-spacing:-0.3px;">100001</span>
<div class="b" style="left:693px;top:568px;width:167px;height:20px;background:#ffffff;"></div>
<span class="t" style="top:572.27px;font-size:11.3px;line-height:12.62px;color:#252423;right:447.00px;font-style:italic;letter-spacing:-0.3px;">1</span>
<div class="b" style="left:861px;top:568px;width:159px;height:20px;background:#ffffff;"></div>
<span class="t" style="top:572.27px;font-size:11.3px;line-height:12.62px;color:#252423;right:287.00px;font-style:italic;letter-spacing:-0.1px;">15<span style="margin:0 0.4px">/</span>04<span style="margin:0 0.4px">/</span>2023 00:00:00</span>
<div class="b" style="left:184px;top:589px;width:28px;height:20px;background:#f3f2f1;"></div>
<span class="t" style="top:593.64px;font-size:12px;line-height:13.40px;color:#605e5c;right:1099.70px;letter-spacing:-0.5px;margin-right:-0.5px;">14</span>
<div class="b" style="left:213px;top:589px;width:159px;height:20px;background:#e6e6e6;"></div>
<span class="t" style="top:592.94px;font-size:11px;line-height:12.29px;color:#252423;left:216.00px;letter-spacing:-0.27px;">DS-350-414-539</span>
<div class="b" style="left:373px;top:589px;width:159px;height:20px;background:#ffffff;"></div>
<span class="t" style="top:593.27px;font-size:11.3px;line-height:12.62px;color:#252423;right:775.00px;font-style:italic;letter-spacing:-0.3px;">1309</span>
<div class="b" style="left:533px;top:589px;width:159px;height:20px;background:#ffffff;"></div>
<span class="t" style="top:593.27px;font-size:11.3px;line-height:12.62px;color:#252423;right:615.00px;font-style:italic;letter-spacing:-0.3px;">100005</span>
<div class="b" style="left:693px;top:589px;width:167px;height:20px;background:#ffffff;"></div>
<span class="t" style="top:593.27px;font-size:11.3px;line-height:12.62px;color:#252423;right:447.00px;font-style:italic;letter-spacing:-0.3px;">1</span>
<div class="b" style="left:861px;top:589px;width:159px;height:20px;background:#ffffff;"></div>
<span class="t" style="top:593.27px;font-size:11.3px;line-height:12.62px;color:#252423;right:287.00px;font-style:italic;letter-spacing:-0.1px;">02<span style="margin:0 0.4px">/</span>05<span style="margin:0 0.4px">/</span>2023 00:00:00</span>
<div class="b" style="left:184px;top:610px;width:28px;height:20px;background:#f3f2f1;"></div>
<span class="t" style="top:614.64px;font-size:12px;line-height:13.40px;color:#605e5c;right:1099.70px;letter-spacing:-0.5px;margin-right:-0.5px;">15</span>
<div class="b" style="left:213px;top:610px;width:159px;height:20px;background:#e6e6e6;"></div>
<span class="t" style="top:613.94px;font-size:11px;line-height:12.29px;color:#252423;left:216.00px;letter-spacing:-0.27px;">DSB-694-734-879</span>
<div class="b" style="left:373px;top:610px;width:159px;height:20px;background:#ffffff;"></div>
<span class="t" style="top:614.27px;font-size:11.3px;line-height:12.62px;color:#252423;right:775.00px;font-style:italic;letter-spacing:-0.3px;">2735</span>
<div class="b" style="left:533px;top:610px;width:159px;height:20px;background:#ffffff;"></div>
<span class="t" style="top:614.27px;font-size:11.3px;line-height:12.62px;color:#252423;right:615.00px;font-style:italic;letter-spacing:-0.3px;">100009</span>
<div class="b" style="left:693px;top:610px;width:167px;height:20px;background:#ffffff;"></div>
<span class="t" style="top:614.27px;font-size:11.3px;line-height:12.62px;color:#252423;right:447.00px;font-style:italic;letter-spacing:-0.3px;">1</span>
<div class="b" style="left:861px;top:610px;width:159px;height:20px;background:#ffffff;"></div>
<span class="t" style="top:614.27px;font-size:11.3px;line-height:12.62px;color:#252423;right:287.00px;font-style:italic;letter-spacing:-0.1px;">16<span style="margin:0 0.4px">/</span>11<span style="margin:0 0.4px">/</span>2023 00:00:00</span>
<div class="b" style="left:184px;top:631px;width:28px;height:20px;background:#f3f2f1;"></div>
<span class="t" style="top:635.64px;font-size:12px;line-height:13.40px;color:#605e5c;right:1099.70px;letter-spacing:-0.5px;margin-right:-0.5px;">16</span>
<div class="b" style="left:213px;top:631px;width:159px;height:20px;background:#e6e6e6;"></div>
<span class="t" style="top:634.94px;font-size:11px;line-height:12.29px;color:#252423;left:216.00px;letter-spacing:-0.27px;">DTB-210-744-537</span>
<div class="b" style="left:373px;top:631px;width:159px;height:20px;background:#ffffff;"></div>
<span class="t" style="top:635.27px;font-size:11.3px;line-height:12.62px;color:#252423;right:775.00px;font-style:italic;letter-spacing:-0.3px;">5053</span>
<div class="b" style="left:533px;top:631px;width:159px;height:20px;background:#ffffff;"></div>
<span class="t" style="top:635.27px;font-size:11.3px;line-height:12.62px;color:#252423;right:615.00px;font-style:italic;letter-spacing:-0.3px;">100003</span>
<div class="b" style="left:693px;top:631px;width:167px;height:20px;background:#ffffff;"></div>
<span class="t" style="top:635.27px;font-size:11.3px;line-height:12.62px;color:#252423;right:447.00px;font-style:italic;letter-spacing:-0.3px;">1</span>
<div class="b" style="left:861px;top:631px;width:159px;height:20px;background:#ffffff;"></div>
<span class="t" style="top:635.27px;font-size:11.3px;line-height:12.62px;color:#252423;right:287.00px;font-style:italic;letter-spacing:-0.1px;">08<span style="margin:0 0.4px">/</span>09<span style="margin:0 0.4px">/</span>2023 00:00:00</span>
<div class="b" style="left:184px;top:652px;width:28px;height:20px;background:#f3f2f1;"></div>
<span class="t" style="top:656.64px;font-size:12px;line-height:13.40px;color:#605e5c;right:1099.70px;letter-spacing:-0.5px;margin-right:-0.5px;">17</span>
<div class="b" style="left:213px;top:652px;width:159px;height:20px;background:#e6e6e6;"></div>
<span class="t" style="top:655.94px;font-size:11px;line-height:12.29px;color:#252423;left:216.00px;letter-spacing:-0.27px;">DTB-395-412-673</span>
<div class="b" style="left:373px;top:652px;width:159px;height:20px;background:#ffffff;"></div>
<span class="t" style="top:656.27px;font-size:11.3px;line-height:12.62px;color:#252423;right:775.00px;font-style:italic;letter-spacing:-0.3px;">4305</span>
<div class="b" style="left:533px;top:652px;width:159px;height:20px;background:#ffffff;"></div>
<span class="t" style="top:656.27px;font-size:11.3px;line-height:12.62px;color:#252423;right:615.00px;font-style:italic;letter-spacing:-0.3px;">100000</span>
<div class="b" style="left:693px;top:652px;width:167px;height:20px;background:#ffffff;"></div>
<span class="t" style="top:656.27px;font-size:11.3px;line-height:12.62px;color:#252423;right:447.00px;font-style:italic;letter-spacing:-0.3px;">2</span>
<div class="b" style="left:861px;top:652px;width:159px;height:20px;background:#ffffff;"></div>
<span class="t" style="top:656.27px;font-size:11.3px;line-height:12.62px;color:#252423;right:287.00px;font-style:italic;letter-spacing:-0.1px;">29<span style="margin:0 0.4px">/</span>03<span style="margin:0 0.4px">/</span>2023 00:00:00</span>
<div class="b" style="left:184px;top:673px;width:28px;height:20px;background:#f3f2f1;"></div>
<span class="t" style="top:677.64px;font-size:12px;line-height:13.40px;color:#605e5c;right:1099.70px;letter-spacing:-0.5px;margin-right:-0.5px;">18</span>
<div class="b" style="left:213px;top:673px;width:159px;height:20px;background:#e6e6e6;"></div>
<span class="t" style="top:676.94px;font-size:11px;line-height:12.29px;color:#252423;left:216.00px;letter-spacing:-0.27px;">DTB-849-468-150</span>
<div class="b" style="left:373px;top:673px;width:159px;height:20px;background:#ffffff;"></div>
<span class="t" style="top:677.27px;font-size:11.3px;line-height:12.62px;color:#252423;right:775.00px;font-style:italic;letter-spacing:-0.3px;">8573</span>
<div class="b" style="left:533px;top:673px;width:159px;height:20px;background:#ffffff;"></div>
<span class="t" style="top:677.27px;font-size:11.3px;line-height:12.62px;color:#252423;right:615.00px;font-style:italic;letter-spacing:-0.3px;">100010</span>
<div class="b" style="left:693px;top:673px;width:167px;height:20px;background:#ffffff;"></div>
<span class="t" style="top:677.27px;font-size:11.3px;line-height:12.62px;color:#252423;right:447.00px;font-style:italic;letter-spacing:-0.3px;">1</span>
<div class="b" style="left:861px;top:673px;width:159px;height:20px;background:#ffffff;"></div>
<span class="t" style="top:677.27px;font-size:11.3px;line-height:12.62px;color:#252423;right:287.00px;font-style:italic;letter-spacing:-0.1px;">01<span style="margin:0 0.4px">/</span>05<span style="margin:0 0.4px">/</span>2023 00:00:00</span>
<div class="b" style="left:184px;top:694px;width:28px;height:20px;background:#f3f2f1;"></div>
<span class="t" style="top:698.64px;font-size:12px;line-height:13.40px;color:#605e5c;right:1099.70px;letter-spacing:-0.5px;margin-right:-0.5px;">19</span>
<div class="b" style="left:213px;top:694px;width:159px;height:20px;background:#e6e6e6;"></div>
<span class="t" style="top:697.94px;font-size:11px;line-height:12.29px;color:#252423;left:216.00px;letter-spacing:-0.27px;">DS-827-477-284</span>
<div class="b" style="left:373px;top:694px;width:159px;height:20px;background:#ffffff;"></div>
<span class="t" style="top:698.27px;font-size:11.3px;line-height:12.62px;color:#252423;right:775.00px;font-style:italic;letter-spacing:-0.3px;">6423</span>
<div class="b" style="left:533px;top:694px;width:159px;height:20px;background:#ffffff;"></div>
<span class="t" style="top:698.27px;font-size:11.3px;line-height:12.62px;color:#252423;right:615.00px;font-style:italic;letter-spacing:-0.3px;">100002</span>
<div class="b" style="left:693px;top:694px;width:167px;height:20px;background:#ffffff;"></div>
<span class="t" style="top:698.27px;font-size:11.3px;line-height:12.62px;color:#252423;right:447.00px;font-style:italic;letter-spacing:-0.3px;">2</span>
<div class="b" style="left:861px;top:694px;width:159px;height:20px;background:#ffffff;"></div>
<span class="t" style="top:698.27px;font-size:11.3px;line-height:12.62px;color:#252423;right:287.00px;font-style:italic;letter-spacing:-0.1px;">01<span style="margin:0 0.4px">/</span>11<span style="margin:0 0.4px">/</span>2023 00:00:00</span>
<div class="b" style="left:184px;top:715px;width:28px;height:20px;background:#f3f2f1;"></div>
<span class="t" style="top:719.64px;font-size:12px;line-height:13.40px;color:#605e5c;right:1099.70px;letter-spacing:-0.5px;margin-right:-0.5px;">20</span>
<div class="b" style="left:213px;top:715px;width:159px;height:20px;background:#e6e6e6;"></div>
<span class="t" style="top:718.94px;font-size:11px;line-height:12.29px;color:#252423;left:216.00px;letter-spacing:-0.27px;">DSB-285-481-368</span>
<div class="b" style="left:373px;top:715px;width:159px;height:20px;background:#ffffff;"></div>
<span class="t" style="top:719.27px;font-size:11.3px;line-height:12.62px;color:#252423;right:775.00px;font-style:italic;letter-spacing:-0.3px;">3289</span>
<div class="b" style="left:533px;top:715px;width:159px;height:20px;background:#ffffff;"></div>
<span class="t" style="top:719.27px;font-size:11.3px;line-height:12.62px;color:#252423;right:615.00px;font-style:italic;letter-spacing:-0.3px;">100005</span>
<div class="b" style="left:693px;top:715px;width:167px;height:20px;background:#ffffff;"></div>
<span class="t" style="top:719.27px;font-size:11.3px;line-height:12.62px;color:#252423;right:447.00px;font-style:italic;letter-spacing:-0.3px;">2</span>
<div class="b" style="left:861px;top:715px;width:159px;height:20px;background:#ffffff;"></div>
<span class="t" style="top:719.27px;font-size:11.3px;line-height:12.62px;color:#252423;right:287.00px;font-style:italic;letter-spacing:-0.1px;">18<span style="margin:0 0.4px">/</span>11<span style="margin:0 0.4px">/</span>2023 00:00:00</span>
<div class="b" style="left:184px;top:736px;width:28px;height:20px;background:#f3f2f1;"></div>
<span class="t" style="top:740.64px;font-size:12px;line-height:13.40px;color:#605e5c;right:1099.70px;letter-spacing:-0.5px;margin-right:-0.5px;">21</span>
<div class="b" style="left:213px;top:736px;width:159px;height:20px;background:#e6e6e6;"></div>
<span class="t" style="top:739.94px;font-size:11px;line-height:12.29px;color:#252423;left:216.00px;letter-spacing:-0.27px;">DTB-376-157-113</span>
<div class="b" style="left:373px;top:736px;width:159px;height:20px;background:#ffffff;"></div>
<span class="t" style="top:740.27px;font-size:11.3px;line-height:12.62px;color:#252423;right:775.00px;font-style:italic;letter-spacing:-0.3px;">1428</span>
<div class="b" style="left:533px;top:736px;width:159px;height:20px;background:#ffffff;"></div>
<span class="t" style="top:740.27px;font-size:11.3px;line-height:12.62px;color:#252423;right:615.00px;font-style:italic;letter-spacing:-0.3px;">100000</span>
<div class="b" style="left:693px;top:736px;width:167px;height:20px;background:#ffffff;"></div>
<span class="t" style="top:740.27px;font-size:11.3px;line-height:12.62px;color:#252423;right:447.00px;font-style:italic;letter-spacing:-0.3px;">1</span>
<div class="b" style="left:861px;top:736px;width:159px;height:20px;background:#ffffff;"></div>
<span class="t" style="top:740.27px;font-size:11.3px;line-height:12.62px;color:#252423;right:287.00px;font-style:italic;letter-spacing:-0.1px;">31<span style="margin:0 0.4px">/</span>05<span style="margin:0 0.4px">/</span>2023 00:00:00</span>
<div class="b" style="left:184px;top:757px;width:28px;height:20px;background:#f3f2f1;"></div>
<span class="t" style="top:761.64px;font-size:12px;line-height:13.40px;color:#605e5c;right:1099.70px;letter-spacing:-0.5px;margin-right:-0.5px;">22</span>
<div class="b" style="left:213px;top:757px;width:159px;height:20px;background:#e6e6e6;"></div>
<span class="t" style="top:760.94px;font-size:11px;line-height:12.29px;color:#252423;left:216.00px;letter-spacing:-0.27px;">DS-812-253-860</span>
<div class="b" style="left:373px;top:757px;width:159px;height:20px;background:#ffffff;"></div>
<span class="t" style="top:761.27px;font-size:11.3px;line-height:12.62px;color:#252423;right:775.00px;font-style:italic;letter-spacing:-0.3px;">8805</span>
<div class="b" style="left:533px;top:757px;width:159px;height:20px;background:#ffffff;"></div>
<span class="t" style="top:761.27px;font-size:11.3px;line-height:12.62px;color:#252423;right:615.00px;font-style:italic;letter-spacing:-0.3px;">100006</span>
<div class="b" style="left:693px;top:757px;width:167px;height:20px;background:#ffffff;"></div>
<span class="t" style="top:761.27px;font-size:11.3px;line-height:12.62px;color:#252423;right:447.00px;font-style:italic;letter-spacing:-0.3px;">1</span>
<div class="b" style="left:861px;top:757px;width:159px;height:20px;background:#ffffff;"></div>
<span class="t" style="top:761.27px;font-size:11.3px;line-height:12.62px;color:#252423;right:287.00px;font-style:italic;letter-spacing:-0.1px;">26<span style="margin:0 0.4px">/</span>07<span style="margin:0 0.4px">/</span>2023 00:00:00</span>
<div class="b" style="left:184px;top:778px;width:28px;height:20px;background:#f3f2f1;"></div>
<span class="t" style="top:782.64px;font-size:12px;line-height:13.40px;color:#605e5c;right:1099.70px;letter-spacing:-0.5px;margin-right:-0.5px;">23</span>
<div class="b" style="left:213px;top:778px;width:159px;height:20px;background:#e6e6e6;"></div>
<span class="t" style="top:781.94px;font-size:11px;line-height:12.29px;color:#252423;left:216.00px;letter-spacing:-0.27px;">DTB-148-931-227</span>
<div class="b" style="left:373px;top:778px;width:159px;height:20px;background:#ffffff;"></div>
<span class="t" style="top:782.27px;font-size:11.3px;line-height:12.62px;color:#252423;right:775.00px;font-style:italic;letter-spacing:-0.3px;">4684</span>
<div class="b" style="left:533px;top:778px;width:159px;height:20px;background:#ffffff;"></div>
<span class="t" style="top:782.27px;font-size:11.3px;line-height:12.62px;color:#252423;right:615.00px;font-style:italic;letter-spacing:-0.3px;">100010</span>
<div class="b" style="left:693px;top:778px;width:167px;height:20px;background:#ffffff;"></div>
<span class="t" style="top:782.27px;font-size:11.3px;line-height:12.62px;color:#252423;right:447.00px;font-style:italic;letter-spacing:-0.3px;">2</span>
<div class="b" style="left:861px;top:778px;width:159px;height:20px;background:#ffffff;"></div>
<span class="t" style="top:782.27px;font-size:11.3px;line-height:12.62px;color:#252423;right:287.00px;font-style:italic;letter-spacing:-0.1px;">26<span style="margin:0 0.4px">/</span>02<span style="margin:0 0.4px">/</span>2023 00:00:00</span>
<svg class="b" style="left:16px;top:30px" width="26" height="30" viewBox="0 0 26 30"><rect x="0" y="0" width="25.5" height="30" fill="#fff"/><path d="M12 0.5H0.5V29.5H12" fill="none" stroke="#737373"/><rect x="3" y="3" width="5" height="3" fill="#737373"/><rect x="3" y="7" width="5" height="14" fill="#fdeeb5"/><path d="M9 3H12V10Q12 13 15 13H20L9 21Z" fill="#fdeeb5"/><rect x="3" y="22" width="9" height="6" fill="#737373"/><path d="M14.8 1L24.2 10M24.2 1L14.8 10" stroke="#cb2b2b" stroke-width="2.3" fill="none"/><path d="M22.5 13.5V17" stroke="#737373" stroke-width="1"/><path d="M19.6 29.8V20.5M14.6 24.8L19.6 19.6L24.6 24.8" stroke="#3a77b8" stroke-width="2" fill="none"/></svg>
<svg class="b" style="left:74px;top:31px" width="28" height="30" viewBox="0 0 28 30"><path d="M0.5 0.5H13.5L20.5 7.5V27.5H0.5Z" fill="#fff" stroke="#737373"/><path d="M13.5 0.5V7.5H20.5" fill="none" stroke="#737373"/><path d="M15 14.5V27.5A6 2.2 0 0 0 27 27.5V14.5Z" fill="#ecc57a"/><ellipse cx="21" cy="14.5" rx="6" ry="2.3" fill="#f0cf90"/><path d="M15 15.5A6 2.2 0 0 0 27 15.5" fill="none" stroke="#fbf1dc" stroke-width="0.9"/></svg>
<svg class="b" style="left:124px;top:31px" width="28" height="30" viewBox="0 0 28 30"><path d="M0.5 0.5H13.5L20.5 7.5V27.5H0.5Z" fill="#fff" stroke="#737373"/><path d="M13.5 0.5V7.5H20.5" fill="none" stroke="#737373"/><circle cx="19.5" cy="22.2" r="8.4" fill="#f3f4f6"/><circle cx="19.5" cy="22.2" r="7.1" fill="#fff" stroke="#4a7ebb" stroke-width="1"/><path d="M19.5 17.5V22.5H23" fill="none" stroke="#666" stroke-width="1"/></svg>
<svg class="b" style="left:169px;top:32px" width="28" height="26" viewBox="0 0 28 26"><rect x="0.5" y="0.5" width="27" height="25" fill="#fff" stroke="#737373"/><rect x="0" y="0" width="28" height="5" fill="#4a7ebb"/><path d="M1 9.5H27M1 14.5H27M1 19.5H27M9.5 5V25M18.5 5V25" stroke="#9a9a9a" fill="none"/></svg>
<svg class="b" style="left:237px;top:31px" width="28" height="30" viewBox="0 0 28 30"><path d="M0.5 0.5H13.5L20.5 7.5V27.5H0.5Z" fill="#fff" stroke="#737373"/><path d="M13.5 0.5V7.5H20.5" fill="none" stroke="#737373"/><circle cx="18" cy="21" r="9.3" fill="#f3f4f6"/><path d="M25.46 19.09L25.46 22.91L22.61 22.95L21.99 24.01L23.38 26.51L20.08 28.41L18.62 25.96L17.38 25.96L15.92 28.41L12.62 26.51L14.01 24.01L13.39 22.95L10.54 22.91L10.54 19.09L13.39 19.05L14.01 17.99L12.62 15.49L15.92 13.59L17.38 16.04L18.62 16.04L20.08 13.59L23.38 15.49L21.99 17.99L22.61 19.05Z" fill="#e8873a" stroke="#e8873a" stroke-width="1" stroke-linejoin="round"/><circle cx="18" cy="21" r="2.6" fill="#fff"/></svg>
<svg class="b" style="left:315px;top:31px" width="24" height="28" viewBox="0 0 24 28"><rect x="0.5" y="0.5" width="22" height="27" fill="#fff" stroke="#737373"/><path d="M3 3.5H9M3 11.5H9M3 19.5H9" stroke="#8a8a8a" fill="none"/><rect x="11.5" y="3.5" width="8" height="5" fill="#fff" stroke="#3a77b8"/><rect x="11.5" y="11.5" width="8" height="5" fill="#fff" stroke="#3a77b8"/><rect x="11.5" y="19.5" width="8" height="5" fill="#fff" stroke="#3a77b8"/></svg>
<svg class="b" style="left:394px;top:31px" width="31" height="31" viewBox="0 0 31 31"><path d="M0.5 0.5H27.5V16H22V27.5H0.5Z" fill="#fff"/><rect x="1.2" y="1.2" width="25.6" height="2.8" fill="#c8c8c8"/><path d="M22 27.5H0.5V0.5H27.5V16M0.5 4.5H27.5M0.5 12.5H27.5M0.5 19.5H19.5M9.5 4.5V27.5M18.5 4.5V21M18.5 25.5V27.5" stroke="#000" stroke-width="1.2" fill="none"/><path d="M13.5 23.2H29M23.2 17L29.5 23.2L23.2 29.5" fill="none" stroke="#2b88c8" stroke-width="1.2"/></svg>
<svg class="b" style="left:469px;top:30px" width="30" height="31" viewBox="0 0 30 31"><path d="M0.5 0.5H13.5L20.5 7.5V27.5H0.5Z" fill="#fff" stroke="#737373"/><path d="M13.5 0.5V7.5H20.5" fill="none" stroke="#737373"/><circle cx="20.2" cy="23.3" r="8.3" fill="#f3f4f6"/><path d="M14.6 22.2A5.8 5.8 0 0 1 24.6 19.4" fill="none" stroke="#66a98f" stroke-width="2.4"/><path d="M26.6 16.2V22H20.8Z" fill="#66a98f"/><path d="M25.8 24.4A5.8 5.8 0 0 1 15.8 27.2" fill="none" stroke="#66a98f" stroke-width="2.4"/><path d="M13.8 30.4V24.6H19.6Z" fill="#66a98f"/></svg>
<svg class="b" style="left:508px;top:29px" width="18" height="17" viewBox="0 0 18 17"><path d="M1.5 0.5H7.5L11.5 4.5V13.5H1.5Z" fill="#fff" stroke="#808080"/><path d="M7.5 0.5V4.5H11.5" fill="none" stroke="#808080"/><circle cx="4.3" cy="6.4" r="1.2" fill="#8a8a8a"/><circle cx="4.3" cy="10.4" r="1.1" fill="#fff" stroke="#8a8a8a" stroke-width="0.8"/><path d="M6.8 6.4H9.8" stroke="#8a8a8a"/><rect x="7.5" y="8.5" width="9" height="7" fill="#fff" stroke="#737373"/><rect x="7" y="8" width="10" height="2.2" fill="#3a77b8"/><path d="M8 12.7H16.5M10.5 10.2V15.5M13.5 10.2V15.5" stroke="#8a8a8a" stroke-width="0.9" fill="none"/></svg>
<svg class="b" style="left:509px;top:52px" width="17" height="14" viewBox="0 0 17 14"><path d="M2.5 0.6H13.6Q15.6 0.6 15.6 2.4V3.6H13.5V11.4Q13.5 13.4 11.6 13.4H2.5" fill="#fff" stroke="#666" stroke-width="1"/><path d="M2.5 0.6V10.2" stroke="#666" fill="none"/><path d="M13.5 0.9Q15.9 0.9 15.9 3.6H13.5Z" fill="#666"/><path d="M5 3.5H11M5 5.5H11M5 7.5H11" stroke="#8a8a8a" stroke-width="0.9"/><path d="M0.2 11.8Q0.2 10.1 2 10.1H9.3V13.6H2Q0.2 13.6 0.2 11.8Z" fill="#6a6a6a"/></svg>
<svg class="b" style="left:510px;top:75px" width="14" height="12" viewBox="0 0 14 12"><rect x="0.5" y="0.5" width="12" height="11" fill="#fff" stroke="#737373"/><rect x="0" y="0" width="13" height="3" fill="#4a7ebb"/><path d="M1 6H12.5M1 8.8H12.5M4.5 3V11.5M8.5 3V11.5" stroke="#9a9a9a" stroke-width="0.9" fill="none"/></svg>
<svg class="b" style="left:642px;top:32px" width="28" height="26" viewBox="0 0 28 26"><rect x="0.5" y="0.5" width="27" height="25" fill="#fff"/><rect x="1" y="1" width="18" height="24" fill="#bdd3ea"/><path d="M1 5.5H27M1 10.5H27M1 15.5H27M1 20.5H27M9.5 1V25M18.5 1V25" stroke="#a8a8a8" fill="none"/><rect x="0.5" y="0.5" width="27" height="25" fill="none" stroke="#737373"/></svg>
<svg class="b" style="left:703px;top:32px" width="23" height="30" viewBox="0 0 23 30"><path d="M0.5 0V9.5H21.5V0Z" fill="#fff"/><path d="M0.5 0V9.5H6.5M15.5 9.5H21.5V0" fill="none" stroke="#737373"/><path d="M7.5 0V13.5L11 16.5L14.5 13.5V0Z" fill="#bdd3ea"/><path d="M7.5 0V13.5M14.5 0V13.5" stroke="#a8a8a8" fill="none"/><path d="M3.5 14.2C6 14.8 12 20.5 19.2 28.6C14.5 24.8 8 18.6 3.5 14.2Z" fill="#d9583a" stroke="#d9583a" stroke-width="1.6" stroke-linejoin="round"/><path d="M19 15.2C15.5 16.5 7 22.5 3 28.3C8 24 15 18.6 19 15.2Z" fill="#d9583a" stroke="#d9583a" stroke-width="1.6" stroke-linejoin="round"/></svg>
<svg class="b" style="left:761px;top:28px" width="31" height="31" viewBox="0 0 31 31"><rect x="0" y="3.2" width="28" height="8.6" fill="#4a7ebb" transform="translate(0,0)"/><g transform="translate(0,3)"><rect x="0.5" y="11.5" width="27" height="16" fill="#fff" stroke="#737373"/><path d="M9.5 11.5V27.5M18.5 11.5V27.5M0.5 19.5H27.5" stroke="#737373" fill="none"/></g><path d="M16.2 8L21 13L29.5 2.2" fill="none" stroke="#fff" stroke-width="4.2"/><path d="M16.2 8L21 13L29.5 2.2" fill="none" stroke="#5fa58a" stroke-width="2.2"/></svg>
<svg class="b" style="left:804px;top:28px" width="31" height="31" viewBox="0 0 31 31"><rect x="0" y="3.2" width="28" height="8.6" fill="#4a7ebb"/><g transform="translate(0,3)"><rect x="0.5" y="11.5" width="27" height="16" fill="#fff" stroke="#737373"/><path d="M9.5 11.5V27.5M18.5 11.5V27.5M0.5 19.5H27.5" stroke="#737373" fill="none"/></g><path d="M18 2.6L28 12.6M28.2 2.8L17.6 12.4" stroke="#f3f4f6" stroke-width="3.6" fill="none"/><path d="M18 2.6C20.5 3.8 24 7.5 28 12.6C25 10 20.8 6 18 2.6Z" fill="#d9583a" stroke="#d9583a" stroke-width="1.2" stroke-linejoin="round"/><path d="M28.2 2.8C25.5 4 20.8 8.3 17.6 12.4C21 9.6 25.4 5.8 28.2 2.8Z" fill="#d9583a" stroke="#d9583a" stroke-width="1.2" stroke-linejoin="round"/></svg>
<svg class="b" style="left:856.2px;top:29px" width="16" height="17" viewBox="0 0 16 17"><text x="0" y="7.3" font-family="Liberation Sans" font-size="9.5" fill="#3a77b8" stroke="#3a77b8" stroke-width="0.25">A</text><text x="0" y="15.3" font-family="Liberation Sans" font-size="9.5" fill="#8a4fb8" stroke="#8a4fb8" stroke-width="0.25">Z</text><path d="M11.2 0V14.5M8.4 11.6L11.2 14.8L14 11.6" fill="none" stroke="#444" stroke-width="1"/></svg>
<svg class="b" style="left:856.2px;top:51px" width="16" height="17" viewBox="0 0 16 17"><text x="0" y="7.3" font-family="Liberation Sans" font-size="9.5" fill="#8a4fb8" stroke="#8a4fb8" stroke-width="0.25">Z</text><text x="0" y="15.3" font-family="Liberation Sans" font-size="9.5" fill="#3a77b8" stroke="#3a77b8" stroke-width="0.25">A</text><path d="M11.2 0V14.5M8.4 11.6L11.2 14.8L14 11.6" fill="none" stroke="#444" stroke-width="1"/></svg>
<svg class="b" style="left:897px;top:30px" width="29" height="30" viewBox="0 0 29 30"><path d="M0.5 29V15.5H27.5V29" fill="#fff"/><path d="M0.5 29V15.5H7M21 15.5H27.5V29" fill="none" stroke="#737373"/><rect x="8" y="4" width="12.5" height="25" fill="#fff"/><rect x="8.5" y="4" width="3.6" height="25" fill="#bdd3ea"/><rect x="16.2" y="4" width="3.6" height="25" fill="#bdd3ea"/><path d="M8.5 4V29M12.2 4V29M16.2 4V29M19.9 4V29" stroke="#a8a8a8" stroke-width="0.9" fill="none"/><path d="M11.6 1H16.8L14.2 3.8Z" fill="#3a77b8"/></svg>
<svg class="b" style="left:945px;top:35px" width="29" height="21" viewBox="0 0 29 21"><path d="M13.5 6.5L20.5 13.5" stroke="#737373" fill="none"/><rect x="0.5" y="0.5" width="20" height="6" fill="#fff" stroke="#737373"/><rect x="7.5" y="13.5" width="20" height="6" fill="#fff" stroke="#737373"/></svg>
<svg class="b" style="left:984px;top:52px" width="14" height="13" viewBox="0 0 14 13"><rect x="0.5" y="0.5" width="12" height="12" fill="#fff" stroke="#737373"/><path d="M1 3.8H12.5M1 6.7H12.5M1 9.6H12.5M3.5 1V12.5M6.5 1V12.5M9.5 1V12.5" stroke="#b0b0b0" stroke-width="0.9" fill="none"/><path d="M1.2 2.1H12" stroke="#4a7ebb" stroke-width="1.8" stroke-dasharray="2 1"/></svg>
<svg class="b" style="left:982px;top:72px" width="18" height="18" viewBox="0 0 18 18"><text x="1" y="8" font-family="Liberation Sans" font-size="8.5" fill="#555">1</text><text x="12" y="17" font-family="Liberation Sans" font-size="8.5" fill="#555">2</text><path d="M2.5 9.5Q3 13.5 9 13.5" fill="none" stroke="#3a77b8" stroke-width="1.5"/><path d="M6.8 10.6L9.8 13.5L6.8 16.4" fill="none" stroke="#3a77b8" stroke-width="1.5"/></svg>
<svg class="b" style="left:1158px;top:30px" width="17" height="16" viewBox="0 0 17 16"><rect x="2.5" y="0.5" width="9.5" height="6.5" fill="#fff" stroke="#737373"/><path d="M2.5 2.6H12M2.5 4.8H12M5.6 0.5V7M8.8 0.5V7" stroke="#9a9a9a" stroke-width="0.8" fill="none"/><rect x="2" y="0" width="10.5" height="1.6" fill="#737373"/><rect x="7.5" y="6.5" width="8.5" height="7" fill="#fff" stroke="#737373"/><rect x="7" y="6" width="9.5" height="2" fill="#3a77b8"/><path d="M7.5 10.2H16M7.5 12H16M10.4 8V13.5M13.2 8V13.5" stroke="#9a9a9a" stroke-width="0.8" fill="none"/><path d="M1 9.5Q1.2 12.6 5.8 12.6M3.8 10.2L6.4 12.6L3.8 15" fill="none" stroke="#3a77b8" stroke-width="1.4"/></svg>
<svg class="b" style="left:1158px;top:51px" width="18" height="17" viewBox="0 0 18 17"><rect x="0.5" y="1.5" width="16" height="3" fill="#fff" stroke="#737373"/><rect x="0" y="0" width="17" height="1.8" fill="#3a77b8"/><path d="M4.5 1.5V4.5M8.5 1.5V4.5M12.5 1.5V4.5" stroke="#737373" fill="none"/><rect x="0.5" y="12.5" width="16" height="3.5" fill="#fff" stroke="#737373"/><path d="M4.5 12.5V16M8.5 12.5V16M12.5 12.5V16" stroke="#737373" fill="none"/><path d="M8.5 5V12" stroke="#3a77b8" stroke-width="1.2"/><path d="M6 6L8.5 8.4L11 6Z" fill="#3a77b8"/><path d="M6 11.2L8.5 8.8L11 11.2Z" fill="#3a77b8"/></svg>
<svg class="b" style="left:1159px;top:73px" width="16" height="16" viewBox="0 0 16 16"><rect x="0.5" y="0.5" width="15" height="15" fill="#eaf0f8" stroke="#9db8d9"/><path d="M4.6 3V9.5M2.6 7.6L4.6 10L6.6 7.6M11.2 3V9.5M9.2 7.6L11.2 10L13.2 7.6" fill="none" stroke="#8aa5c6" stroke-width="1"/><path d="M2.5 12.5H13.5" stroke="#8aa5c6" stroke-width="1"/></svg>
</div></body></html>
